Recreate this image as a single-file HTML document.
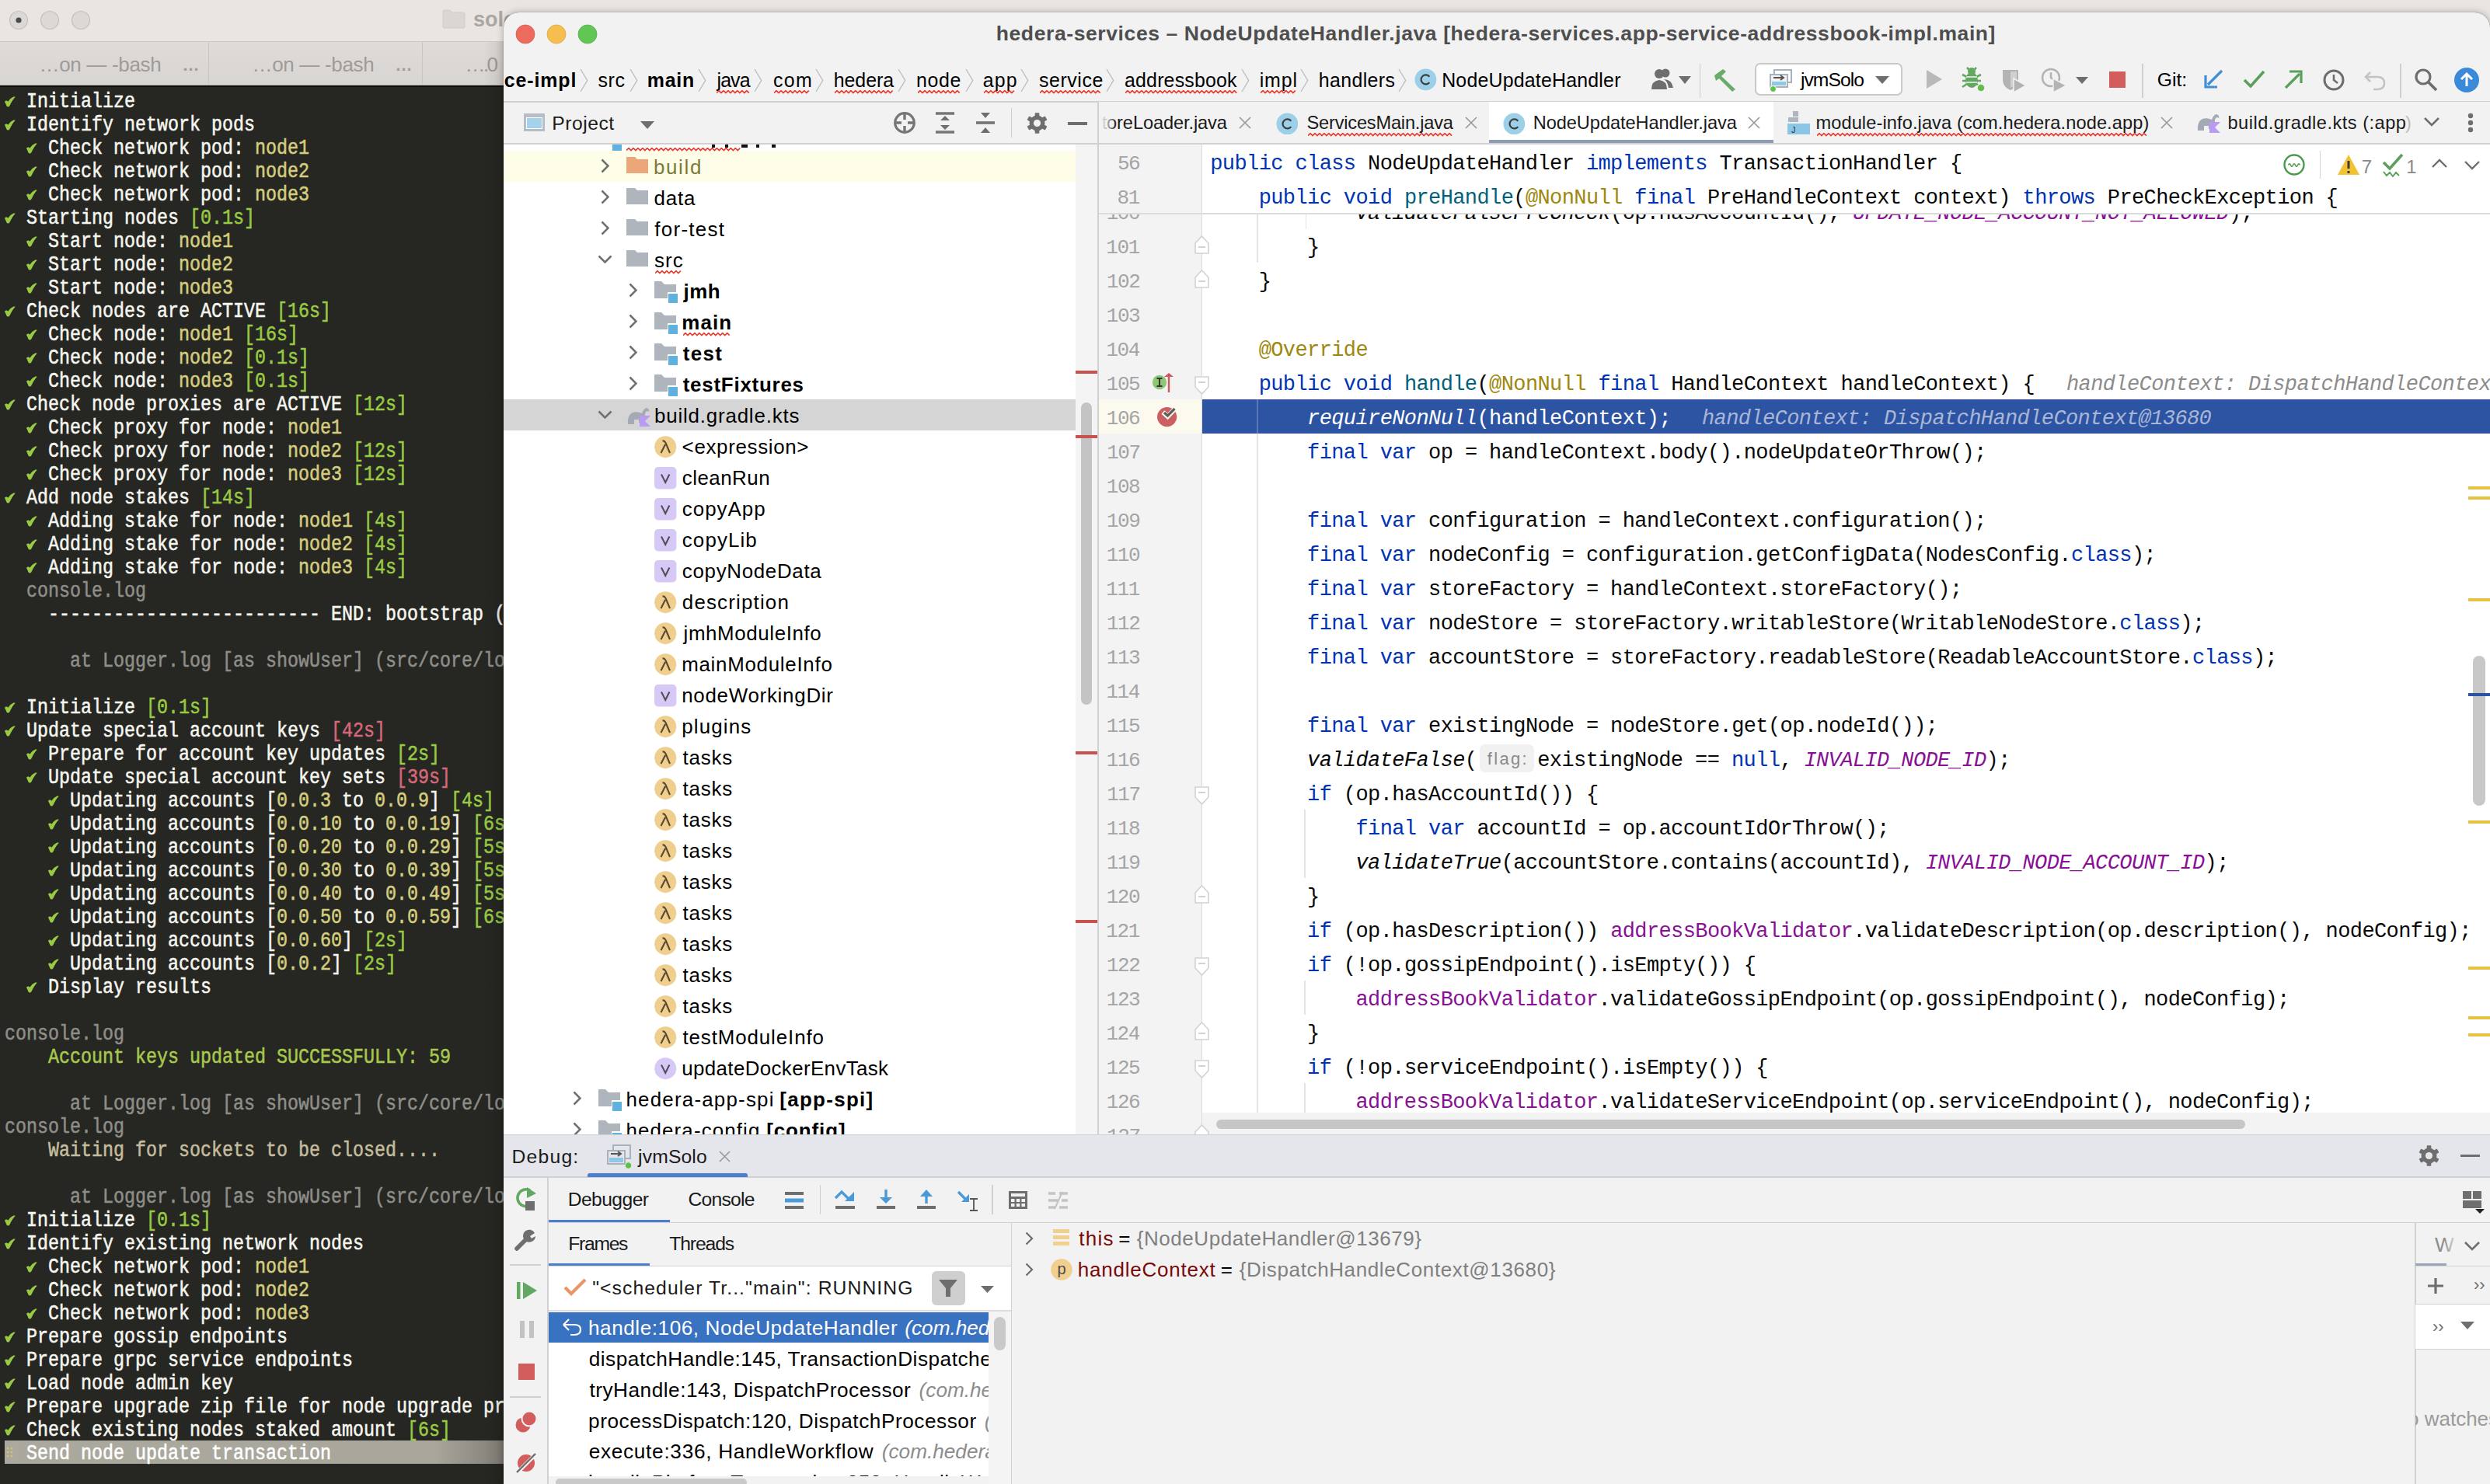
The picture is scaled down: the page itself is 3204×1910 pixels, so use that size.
<!DOCTYPE html><html><head><meta charset="utf-8"><style>
html,body{margin:0;padding:0;}
body{width:3204px;height:1910px;overflow:hidden;position:relative;background:#e6e2df;font-family:"Liberation Sans",sans-serif;}
.t{position:absolute;line-height:0;white-space:pre;}
.r{position:absolute;display:block;}
.clip{position:absolute;overflow:hidden;}
</style></head><body>
<div class="r" style="left:0.00px;top:0.00px;width:3204.00px;height:54.00px;background:#e9e5e2;"></div>
<div class="r" style="left:0.00px;top:53.00px;width:3204.00px;height:1.00px;background:#cdc9c6;"></div>
<svg class="r" style="left:11.00px;top:13.00px;" width="26" height="26" viewBox="0 0 26 26"><circle cx="13" cy="13" r="11.5" fill="#dcd8d5" stroke="#c3bfbc" stroke-width="1.2"/><circle cx="13" cy="13" r="3.6" fill="#4b4b4b"/></svg>
<svg class="r" style="left:51.00px;top:13.00px;" width="26" height="26" viewBox="0 0 26 26"><circle cx="13" cy="13" r="11.5" fill="#dcd8d5" stroke="#c3bfbc" stroke-width="1.2"/></svg>
<svg class="r" style="left:91.00px;top:13.00px;" width="26" height="26" viewBox="0 0 26 26"><circle cx="13" cy="13" r="11.5" fill="#dcd8d5" stroke="#c3bfbc" stroke-width="1.2"/></svg>
<svg class="r" style="left:569.00px;top:11.00px;" width="30" height="26" viewBox="0 0 30 26"><path d="M1 4 Q1 2 3 2 L10 2 L13 5 L27 5 Q29 5 29 7 L29 23 Q29 25 27 25 L3 25 Q1 25 1 23 Z" fill="#d9d6d3" stroke="#cfcbc8"/></svg>
<div class="t" style="left:609.00px;top:24.64px;font-size:27px;color:#a9a6a3;font-weight:bold;">solo</div>
<div class="r" style="left:0px;top:54px;width:648px;height:56px;background:linear-gradient(180deg,#dfdbd8 0%,#d8d4d1 100%);"></div>
<div class="r" style="left:268.00px;top:54.00px;width:1.00px;height:56.00px;background:#c9c5c2;"></div>
<div class="r" style="left:543.00px;top:54.00px;width:1.00px;height:56.00px;background:#c9c5c2;"></div>
<div class="t" style="left:50.47px;top:82.99px;font-size:26px;color:#9e9b98;letter-spacing:-0.319px;">…on — -bash</div>
<div class="t" style="left:234.58px;top:84.38px;font-size:22px;color:#9e9b98;font-weight:bold;">…</div>
<div class="t" style="left:324.47px;top:82.99px;font-size:26px;color:#9e9b98;letter-spacing:-0.319px;">…on — -bash</div>
<div class="t" style="left:508.58px;top:84.38px;font-size:22px;color:#9e9b98;font-weight:bold;">…</div>
<div class="t" style="left:598.47px;top:82.99px;font-size:26px;color:#9e9b98;letter-spacing:-2.569px;">….0</div>
<div class="r" style="left:0.00px;top:109.00px;width:648.00px;height:1.00px;background:#b9b5b2;"></div>
<div class="r" style="left:0.00px;top:110.00px;width:648.00px;height:1800.00px;background:#262622;"></div>
<div class="r" style="left:0.00px;top:110.00px;width:648.00px;height:2.00px;background:#0c0c0a;"></div>
<div class="clip" style="left:0px;top:110px;width:648px;height:1800px;"><div style="position:absolute;left:0px;top:-110px;width:3204px;height:1910px">
<div class="r" style="left:6px;top:1854px;width:650px;height:30px;background:linear-gradient(90deg,#aba99e 0%,#a9a79c 85%,#7d7b72 100%);"></div>
<svg class="r" style="left:6.40px;top:124.00px;" width="15" height="14" viewBox="0 0 15 14"><path d="M0,7.0 Q0.9,5.3 2.8,5.6 Q3.8,5.9 4.3,6.8 Q7.8,2.0 11.3,0.6 Q13.0,0.1 13.8,0.8 Q10.0,4.6 6.4,12.3 Q5.6,13.6 4.2,13.5 Q3.0,13.4 2.4,12.2 Q1.3,9.2 0,7.0 Z" fill="#98ca44"/></svg>
<div class="t" style="left:20.00px;top:131.02px;font-family:'Liberation Mono', monospace;font-size:27.0px;transform:scaleX(0.8641);transform-origin:0 0;-webkit-text-stroke-width:0.55px;"><span style="color:#f6f6f0"> Initialize</span></div>
<svg class="r" style="left:6.40px;top:154.00px;" width="15" height="14" viewBox="0 0 15 14"><path d="M0,7.0 Q0.9,5.3 2.8,5.6 Q3.8,5.9 4.3,6.8 Q7.8,2.0 11.3,0.6 Q13.0,0.1 13.8,0.8 Q10.0,4.6 6.4,12.3 Q5.6,13.6 4.2,13.5 Q3.0,13.4 2.4,12.2 Q1.3,9.2 0,7.0 Z" fill="#98ca44"/></svg>
<div class="t" style="left:20.00px;top:161.02px;font-family:'Liberation Mono', monospace;font-size:27.0px;transform:scaleX(0.8641);transform-origin:0 0;-webkit-text-stroke-width:0.55px;"><span style="color:#f6f6f0"> Identify network pods</span></div>
<div class="t" style="left:6.00px;top:191.02px;font-family:'Liberation Mono', monospace;font-size:27.0px;transform:scaleX(0.8641);transform-origin:0 0;-webkit-text-stroke-width:0.55px;"><span style="color:#f6f6f0">  </span></div>
<svg class="r" style="left:34.40px;top:184.00px;" width="15" height="14" viewBox="0 0 15 14"><path d="M0,7.0 Q0.9,5.3 2.8,5.6 Q3.8,5.9 4.3,6.8 Q7.8,2.0 11.3,0.6 Q13.0,0.1 13.8,0.8 Q10.0,4.6 6.4,12.3 Q5.6,13.6 4.2,13.5 Q3.0,13.4 2.4,12.2 Q1.3,9.2 0,7.0 Z" fill="#98ca44"/></svg>
<div class="t" style="left:48.00px;top:191.02px;font-family:'Liberation Mono', monospace;font-size:27.0px;transform:scaleX(0.8641);transform-origin:0 0;-webkit-text-stroke-width:0.55px;"><span style="color:#f6f6f0"> Check network pod: </span><span style="color:#d4cd7e">node1</span></div>
<div class="t" style="left:6.00px;top:221.02px;font-family:'Liberation Mono', monospace;font-size:27.0px;transform:scaleX(0.8641);transform-origin:0 0;-webkit-text-stroke-width:0.55px;"><span style="color:#f6f6f0">  </span></div>
<svg class="r" style="left:34.40px;top:214.00px;" width="15" height="14" viewBox="0 0 15 14"><path d="M0,7.0 Q0.9,5.3 2.8,5.6 Q3.8,5.9 4.3,6.8 Q7.8,2.0 11.3,0.6 Q13.0,0.1 13.8,0.8 Q10.0,4.6 6.4,12.3 Q5.6,13.6 4.2,13.5 Q3.0,13.4 2.4,12.2 Q1.3,9.2 0,7.0 Z" fill="#98ca44"/></svg>
<div class="t" style="left:48.00px;top:221.02px;font-family:'Liberation Mono', monospace;font-size:27.0px;transform:scaleX(0.8641);transform-origin:0 0;-webkit-text-stroke-width:0.55px;"><span style="color:#f6f6f0"> Check network pod: </span><span style="color:#d4cd7e">node2</span></div>
<div class="t" style="left:6.00px;top:251.02px;font-family:'Liberation Mono', monospace;font-size:27.0px;transform:scaleX(0.8641);transform-origin:0 0;-webkit-text-stroke-width:0.55px;"><span style="color:#f6f6f0">  </span></div>
<svg class="r" style="left:34.40px;top:244.00px;" width="15" height="14" viewBox="0 0 15 14"><path d="M0,7.0 Q0.9,5.3 2.8,5.6 Q3.8,5.9 4.3,6.8 Q7.8,2.0 11.3,0.6 Q13.0,0.1 13.8,0.8 Q10.0,4.6 6.4,12.3 Q5.6,13.6 4.2,13.5 Q3.0,13.4 2.4,12.2 Q1.3,9.2 0,7.0 Z" fill="#98ca44"/></svg>
<div class="t" style="left:48.00px;top:251.02px;font-family:'Liberation Mono', monospace;font-size:27.0px;transform:scaleX(0.8641);transform-origin:0 0;-webkit-text-stroke-width:0.55px;"><span style="color:#f6f6f0"> Check network pod: </span><span style="color:#d4cd7e">node3</span></div>
<svg class="r" style="left:6.40px;top:274.00px;" width="15" height="14" viewBox="0 0 15 14"><path d="M0,7.0 Q0.9,5.3 2.8,5.6 Q3.8,5.9 4.3,6.8 Q7.8,2.0 11.3,0.6 Q13.0,0.1 13.8,0.8 Q10.0,4.6 6.4,12.3 Q5.6,13.6 4.2,13.5 Q3.0,13.4 2.4,12.2 Q1.3,9.2 0,7.0 Z" fill="#98ca44"/></svg>
<div class="t" style="left:20.00px;top:281.02px;font-family:'Liberation Mono', monospace;font-size:27.0px;transform:scaleX(0.8641);transform-origin:0 0;-webkit-text-stroke-width:0.55px;"><span style="color:#f6f6f0"> Starting nodes </span><span style="color:#98ca44">[0.1s]</span></div>
<div class="t" style="left:6.00px;top:311.02px;font-family:'Liberation Mono', monospace;font-size:27.0px;transform:scaleX(0.8641);transform-origin:0 0;-webkit-text-stroke-width:0.55px;"><span style="color:#f6f6f0">  </span></div>
<svg class="r" style="left:34.40px;top:304.00px;" width="15" height="14" viewBox="0 0 15 14"><path d="M0,7.0 Q0.9,5.3 2.8,5.6 Q3.8,5.9 4.3,6.8 Q7.8,2.0 11.3,0.6 Q13.0,0.1 13.8,0.8 Q10.0,4.6 6.4,12.3 Q5.6,13.6 4.2,13.5 Q3.0,13.4 2.4,12.2 Q1.3,9.2 0,7.0 Z" fill="#98ca44"/></svg>
<div class="t" style="left:48.00px;top:311.02px;font-family:'Liberation Mono', monospace;font-size:27.0px;transform:scaleX(0.8641);transform-origin:0 0;-webkit-text-stroke-width:0.55px;"><span style="color:#f6f6f0"> Start node: </span><span style="color:#d4cd7e">node1</span></div>
<div class="t" style="left:6.00px;top:341.02px;font-family:'Liberation Mono', monospace;font-size:27.0px;transform:scaleX(0.8641);transform-origin:0 0;-webkit-text-stroke-width:0.55px;"><span style="color:#f6f6f0">  </span></div>
<svg class="r" style="left:34.40px;top:334.00px;" width="15" height="14" viewBox="0 0 15 14"><path d="M0,7.0 Q0.9,5.3 2.8,5.6 Q3.8,5.9 4.3,6.8 Q7.8,2.0 11.3,0.6 Q13.0,0.1 13.8,0.8 Q10.0,4.6 6.4,12.3 Q5.6,13.6 4.2,13.5 Q3.0,13.4 2.4,12.2 Q1.3,9.2 0,7.0 Z" fill="#98ca44"/></svg>
<div class="t" style="left:48.00px;top:341.02px;font-family:'Liberation Mono', monospace;font-size:27.0px;transform:scaleX(0.8641);transform-origin:0 0;-webkit-text-stroke-width:0.55px;"><span style="color:#f6f6f0"> Start node: </span><span style="color:#d4cd7e">node2</span></div>
<div class="t" style="left:6.00px;top:371.02px;font-family:'Liberation Mono', monospace;font-size:27.0px;transform:scaleX(0.8641);transform-origin:0 0;-webkit-text-stroke-width:0.55px;"><span style="color:#f6f6f0">  </span></div>
<svg class="r" style="left:34.40px;top:364.00px;" width="15" height="14" viewBox="0 0 15 14"><path d="M0,7.0 Q0.9,5.3 2.8,5.6 Q3.8,5.9 4.3,6.8 Q7.8,2.0 11.3,0.6 Q13.0,0.1 13.8,0.8 Q10.0,4.6 6.4,12.3 Q5.6,13.6 4.2,13.5 Q3.0,13.4 2.4,12.2 Q1.3,9.2 0,7.0 Z" fill="#98ca44"/></svg>
<div class="t" style="left:48.00px;top:371.02px;font-family:'Liberation Mono', monospace;font-size:27.0px;transform:scaleX(0.8641);transform-origin:0 0;-webkit-text-stroke-width:0.55px;"><span style="color:#f6f6f0"> Start node: </span><span style="color:#d4cd7e">node3</span></div>
<svg class="r" style="left:6.40px;top:394.00px;" width="15" height="14" viewBox="0 0 15 14"><path d="M0,7.0 Q0.9,5.3 2.8,5.6 Q3.8,5.9 4.3,6.8 Q7.8,2.0 11.3,0.6 Q13.0,0.1 13.8,0.8 Q10.0,4.6 6.4,12.3 Q5.6,13.6 4.2,13.5 Q3.0,13.4 2.4,12.2 Q1.3,9.2 0,7.0 Z" fill="#98ca44"/></svg>
<div class="t" style="left:20.00px;top:401.02px;font-family:'Liberation Mono', monospace;font-size:27.0px;transform:scaleX(0.8641);transform-origin:0 0;-webkit-text-stroke-width:0.55px;"><span style="color:#f6f6f0"> Check nodes are ACTIVE </span><span style="color:#98ca44">[16s]</span></div>
<div class="t" style="left:6.00px;top:431.02px;font-family:'Liberation Mono', monospace;font-size:27.0px;transform:scaleX(0.8641);transform-origin:0 0;-webkit-text-stroke-width:0.55px;"><span style="color:#f6f6f0">  </span></div>
<svg class="r" style="left:34.40px;top:424.00px;" width="15" height="14" viewBox="0 0 15 14"><path d="M0,7.0 Q0.9,5.3 2.8,5.6 Q3.8,5.9 4.3,6.8 Q7.8,2.0 11.3,0.6 Q13.0,0.1 13.8,0.8 Q10.0,4.6 6.4,12.3 Q5.6,13.6 4.2,13.5 Q3.0,13.4 2.4,12.2 Q1.3,9.2 0,7.0 Z" fill="#98ca44"/></svg>
<div class="t" style="left:48.00px;top:431.02px;font-family:'Liberation Mono', monospace;font-size:27.0px;transform:scaleX(0.8641);transform-origin:0 0;-webkit-text-stroke-width:0.55px;"><span style="color:#f6f6f0"> Check node: </span><span style="color:#d4cd7e">node1 </span><span style="color:#98ca44">[16s]</span></div>
<div class="t" style="left:6.00px;top:461.02px;font-family:'Liberation Mono', monospace;font-size:27.0px;transform:scaleX(0.8641);transform-origin:0 0;-webkit-text-stroke-width:0.55px;"><span style="color:#f6f6f0">  </span></div>
<svg class="r" style="left:34.40px;top:454.00px;" width="15" height="14" viewBox="0 0 15 14"><path d="M0,7.0 Q0.9,5.3 2.8,5.6 Q3.8,5.9 4.3,6.8 Q7.8,2.0 11.3,0.6 Q13.0,0.1 13.8,0.8 Q10.0,4.6 6.4,12.3 Q5.6,13.6 4.2,13.5 Q3.0,13.4 2.4,12.2 Q1.3,9.2 0,7.0 Z" fill="#98ca44"/></svg>
<div class="t" style="left:48.00px;top:461.02px;font-family:'Liberation Mono', monospace;font-size:27.0px;transform:scaleX(0.8641);transform-origin:0 0;-webkit-text-stroke-width:0.55px;"><span style="color:#f6f6f0"> Check node: </span><span style="color:#d4cd7e">node2 </span><span style="color:#98ca44">[0.1s]</span></div>
<div class="t" style="left:6.00px;top:491.02px;font-family:'Liberation Mono', monospace;font-size:27.0px;transform:scaleX(0.8641);transform-origin:0 0;-webkit-text-stroke-width:0.55px;"><span style="color:#f6f6f0">  </span></div>
<svg class="r" style="left:34.40px;top:484.00px;" width="15" height="14" viewBox="0 0 15 14"><path d="M0,7.0 Q0.9,5.3 2.8,5.6 Q3.8,5.9 4.3,6.8 Q7.8,2.0 11.3,0.6 Q13.0,0.1 13.8,0.8 Q10.0,4.6 6.4,12.3 Q5.6,13.6 4.2,13.5 Q3.0,13.4 2.4,12.2 Q1.3,9.2 0,7.0 Z" fill="#98ca44"/></svg>
<div class="t" style="left:48.00px;top:491.02px;font-family:'Liberation Mono', monospace;font-size:27.0px;transform:scaleX(0.8641);transform-origin:0 0;-webkit-text-stroke-width:0.55px;"><span style="color:#f6f6f0"> Check node: </span><span style="color:#d4cd7e">node3 </span><span style="color:#98ca44">[0.1s]</span></div>
<svg class="r" style="left:6.40px;top:514.00px;" width="15" height="14" viewBox="0 0 15 14"><path d="M0,7.0 Q0.9,5.3 2.8,5.6 Q3.8,5.9 4.3,6.8 Q7.8,2.0 11.3,0.6 Q13.0,0.1 13.8,0.8 Q10.0,4.6 6.4,12.3 Q5.6,13.6 4.2,13.5 Q3.0,13.4 2.4,12.2 Q1.3,9.2 0,7.0 Z" fill="#98ca44"/></svg>
<div class="t" style="left:20.00px;top:521.02px;font-family:'Liberation Mono', monospace;font-size:27.0px;transform:scaleX(0.8641);transform-origin:0 0;-webkit-text-stroke-width:0.55px;"><span style="color:#f6f6f0"> Check node proxies are ACTIVE </span><span style="color:#98ca44">[12s]</span></div>
<div class="t" style="left:6.00px;top:551.02px;font-family:'Liberation Mono', monospace;font-size:27.0px;transform:scaleX(0.8641);transform-origin:0 0;-webkit-text-stroke-width:0.55px;"><span style="color:#f6f6f0">  </span></div>
<svg class="r" style="left:34.40px;top:544.00px;" width="15" height="14" viewBox="0 0 15 14"><path d="M0,7.0 Q0.9,5.3 2.8,5.6 Q3.8,5.9 4.3,6.8 Q7.8,2.0 11.3,0.6 Q13.0,0.1 13.8,0.8 Q10.0,4.6 6.4,12.3 Q5.6,13.6 4.2,13.5 Q3.0,13.4 2.4,12.2 Q1.3,9.2 0,7.0 Z" fill="#98ca44"/></svg>
<div class="t" style="left:48.00px;top:551.02px;font-family:'Liberation Mono', monospace;font-size:27.0px;transform:scaleX(0.8641);transform-origin:0 0;-webkit-text-stroke-width:0.55px;"><span style="color:#f6f6f0"> Check proxy for node: </span><span style="color:#d4cd7e">node1</span></div>
<div class="t" style="left:6.00px;top:581.02px;font-family:'Liberation Mono', monospace;font-size:27.0px;transform:scaleX(0.8641);transform-origin:0 0;-webkit-text-stroke-width:0.55px;"><span style="color:#f6f6f0">  </span></div>
<svg class="r" style="left:34.40px;top:574.00px;" width="15" height="14" viewBox="0 0 15 14"><path d="M0,7.0 Q0.9,5.3 2.8,5.6 Q3.8,5.9 4.3,6.8 Q7.8,2.0 11.3,0.6 Q13.0,0.1 13.8,0.8 Q10.0,4.6 6.4,12.3 Q5.6,13.6 4.2,13.5 Q3.0,13.4 2.4,12.2 Q1.3,9.2 0,7.0 Z" fill="#98ca44"/></svg>
<div class="t" style="left:48.00px;top:581.02px;font-family:'Liberation Mono', monospace;font-size:27.0px;transform:scaleX(0.8641);transform-origin:0 0;-webkit-text-stroke-width:0.55px;"><span style="color:#f6f6f0"> Check proxy for node: </span><span style="color:#d4cd7e">node2 </span><span style="color:#98ca44">[12s]</span></div>
<div class="t" style="left:6.00px;top:611.02px;font-family:'Liberation Mono', monospace;font-size:27.0px;transform:scaleX(0.8641);transform-origin:0 0;-webkit-text-stroke-width:0.55px;"><span style="color:#f6f6f0">  </span></div>
<svg class="r" style="left:34.40px;top:604.00px;" width="15" height="14" viewBox="0 0 15 14"><path d="M0,7.0 Q0.9,5.3 2.8,5.6 Q3.8,5.9 4.3,6.8 Q7.8,2.0 11.3,0.6 Q13.0,0.1 13.8,0.8 Q10.0,4.6 6.4,12.3 Q5.6,13.6 4.2,13.5 Q3.0,13.4 2.4,12.2 Q1.3,9.2 0,7.0 Z" fill="#98ca44"/></svg>
<div class="t" style="left:48.00px;top:611.02px;font-family:'Liberation Mono', monospace;font-size:27.0px;transform:scaleX(0.8641);transform-origin:0 0;-webkit-text-stroke-width:0.55px;"><span style="color:#f6f6f0"> Check proxy for node: </span><span style="color:#d4cd7e">node3 </span><span style="color:#98ca44">[12s]</span></div>
<svg class="r" style="left:6.40px;top:634.00px;" width="15" height="14" viewBox="0 0 15 14"><path d="M0,7.0 Q0.9,5.3 2.8,5.6 Q3.8,5.9 4.3,6.8 Q7.8,2.0 11.3,0.6 Q13.0,0.1 13.8,0.8 Q10.0,4.6 6.4,12.3 Q5.6,13.6 4.2,13.5 Q3.0,13.4 2.4,12.2 Q1.3,9.2 0,7.0 Z" fill="#98ca44"/></svg>
<div class="t" style="left:20.00px;top:641.02px;font-family:'Liberation Mono', monospace;font-size:27.0px;transform:scaleX(0.8641);transform-origin:0 0;-webkit-text-stroke-width:0.55px;"><span style="color:#f6f6f0"> Add node stakes </span><span style="color:#98ca44">[14s]</span></div>
<div class="t" style="left:6.00px;top:671.02px;font-family:'Liberation Mono', monospace;font-size:27.0px;transform:scaleX(0.8641);transform-origin:0 0;-webkit-text-stroke-width:0.55px;"><span style="color:#f6f6f0">  </span></div>
<svg class="r" style="left:34.40px;top:664.00px;" width="15" height="14" viewBox="0 0 15 14"><path d="M0,7.0 Q0.9,5.3 2.8,5.6 Q3.8,5.9 4.3,6.8 Q7.8,2.0 11.3,0.6 Q13.0,0.1 13.8,0.8 Q10.0,4.6 6.4,12.3 Q5.6,13.6 4.2,13.5 Q3.0,13.4 2.4,12.2 Q1.3,9.2 0,7.0 Z" fill="#98ca44"/></svg>
<div class="t" style="left:48.00px;top:671.02px;font-family:'Liberation Mono', monospace;font-size:27.0px;transform:scaleX(0.8641);transform-origin:0 0;-webkit-text-stroke-width:0.55px;"><span style="color:#f6f6f0"> Adding stake for node: </span><span style="color:#d4cd7e">node1 </span><span style="color:#98ca44">[4s]</span></div>
<div class="t" style="left:6.00px;top:701.02px;font-family:'Liberation Mono', monospace;font-size:27.0px;transform:scaleX(0.8641);transform-origin:0 0;-webkit-text-stroke-width:0.55px;"><span style="color:#f6f6f0">  </span></div>
<svg class="r" style="left:34.40px;top:694.00px;" width="15" height="14" viewBox="0 0 15 14"><path d="M0,7.0 Q0.9,5.3 2.8,5.6 Q3.8,5.9 4.3,6.8 Q7.8,2.0 11.3,0.6 Q13.0,0.1 13.8,0.8 Q10.0,4.6 6.4,12.3 Q5.6,13.6 4.2,13.5 Q3.0,13.4 2.4,12.2 Q1.3,9.2 0,7.0 Z" fill="#98ca44"/></svg>
<div class="t" style="left:48.00px;top:701.02px;font-family:'Liberation Mono', monospace;font-size:27.0px;transform:scaleX(0.8641);transform-origin:0 0;-webkit-text-stroke-width:0.55px;"><span style="color:#f6f6f0"> Adding stake for node: </span><span style="color:#d4cd7e">node2 </span><span style="color:#98ca44">[4s]</span></div>
<div class="t" style="left:6.00px;top:731.02px;font-family:'Liberation Mono', monospace;font-size:27.0px;transform:scaleX(0.8641);transform-origin:0 0;-webkit-text-stroke-width:0.55px;"><span style="color:#f6f6f0">  </span></div>
<svg class="r" style="left:34.40px;top:724.00px;" width="15" height="14" viewBox="0 0 15 14"><path d="M0,7.0 Q0.9,5.3 2.8,5.6 Q3.8,5.9 4.3,6.8 Q7.8,2.0 11.3,0.6 Q13.0,0.1 13.8,0.8 Q10.0,4.6 6.4,12.3 Q5.6,13.6 4.2,13.5 Q3.0,13.4 2.4,12.2 Q1.3,9.2 0,7.0 Z" fill="#98ca44"/></svg>
<div class="t" style="left:48.00px;top:731.02px;font-family:'Liberation Mono', monospace;font-size:27.0px;transform:scaleX(0.8641);transform-origin:0 0;-webkit-text-stroke-width:0.55px;"><span style="color:#f6f6f0"> Adding stake for node: </span><span style="color:#d4cd7e">node3 </span><span style="color:#98ca44">[4s]</span></div>
<div class="t" style="left:6.00px;top:761.02px;font-family:'Liberation Mono', monospace;font-size:27.0px;transform:scaleX(0.8641);transform-origin:0 0;-webkit-text-stroke-width:0.55px;"><span style="color:#8e8e88">  console.log</span></div>
<div class="t" style="left:6.00px;top:791.02px;font-family:'Liberation Mono', monospace;font-size:27.0px;transform:scaleX(0.8641);transform-origin:0 0;-webkit-text-stroke-width:0.55px;"><span style="color:#f6f6f0">    ------------------------- END: bootstrap (</span></div>
<div class="t" style="left:6.00px;top:851.02px;font-family:'Liberation Mono', monospace;font-size:27.0px;transform:scaleX(0.8641);transform-origin:0 0;-webkit-text-stroke-width:0.55px;"><span style="color:#8e8e88">      at Logger.log [as showUser] (src/core/lo</span></div>
<svg class="r" style="left:6.40px;top:904.00px;" width="15" height="14" viewBox="0 0 15 14"><path d="M0,7.0 Q0.9,5.3 2.8,5.6 Q3.8,5.9 4.3,6.8 Q7.8,2.0 11.3,0.6 Q13.0,0.1 13.8,0.8 Q10.0,4.6 6.4,12.3 Q5.6,13.6 4.2,13.5 Q3.0,13.4 2.4,12.2 Q1.3,9.2 0,7.0 Z" fill="#98ca44"/></svg>
<div class="t" style="left:20.00px;top:911.02px;font-family:'Liberation Mono', monospace;font-size:27.0px;transform:scaleX(0.8641);transform-origin:0 0;-webkit-text-stroke-width:0.55px;"><span style="color:#f6f6f0"> Initialize </span><span style="color:#98ca44">[0.1s]</span></div>
<svg class="r" style="left:6.40px;top:934.00px;" width="15" height="14" viewBox="0 0 15 14"><path d="M0,7.0 Q0.9,5.3 2.8,5.6 Q3.8,5.9 4.3,6.8 Q7.8,2.0 11.3,0.6 Q13.0,0.1 13.8,0.8 Q10.0,4.6 6.4,12.3 Q5.6,13.6 4.2,13.5 Q3.0,13.4 2.4,12.2 Q1.3,9.2 0,7.0 Z" fill="#98ca44"/></svg>
<div class="t" style="left:20.00px;top:941.02px;font-family:'Liberation Mono', monospace;font-size:27.0px;transform:scaleX(0.8641);transform-origin:0 0;-webkit-text-stroke-width:0.55px;"><span style="color:#f6f6f0"> Update special account keys </span><span style="color:#d5677a">[42s]</span></div>
<div class="t" style="left:6.00px;top:971.02px;font-family:'Liberation Mono', monospace;font-size:27.0px;transform:scaleX(0.8641);transform-origin:0 0;-webkit-text-stroke-width:0.55px;"><span style="color:#f6f6f0">  </span></div>
<svg class="r" style="left:34.40px;top:964.00px;" width="15" height="14" viewBox="0 0 15 14"><path d="M0,7.0 Q0.9,5.3 2.8,5.6 Q3.8,5.9 4.3,6.8 Q7.8,2.0 11.3,0.6 Q13.0,0.1 13.8,0.8 Q10.0,4.6 6.4,12.3 Q5.6,13.6 4.2,13.5 Q3.0,13.4 2.4,12.2 Q1.3,9.2 0,7.0 Z" fill="#98ca44"/></svg>
<div class="t" style="left:48.00px;top:971.02px;font-family:'Liberation Mono', monospace;font-size:27.0px;transform:scaleX(0.8641);transform-origin:0 0;-webkit-text-stroke-width:0.55px;"><span style="color:#f6f6f0"> Prepare for account key updates </span><span style="color:#98ca44">[2s]</span></div>
<div class="t" style="left:6.00px;top:1001.02px;font-family:'Liberation Mono', monospace;font-size:27.0px;transform:scaleX(0.8641);transform-origin:0 0;-webkit-text-stroke-width:0.55px;"><span style="color:#f6f6f0">  </span></div>
<svg class="r" style="left:34.40px;top:994.00px;" width="15" height="14" viewBox="0 0 15 14"><path d="M0,7.0 Q0.9,5.3 2.8,5.6 Q3.8,5.9 4.3,6.8 Q7.8,2.0 11.3,0.6 Q13.0,0.1 13.8,0.8 Q10.0,4.6 6.4,12.3 Q5.6,13.6 4.2,13.5 Q3.0,13.4 2.4,12.2 Q1.3,9.2 0,7.0 Z" fill="#98ca44"/></svg>
<div class="t" style="left:48.00px;top:1001.02px;font-family:'Liberation Mono', monospace;font-size:27.0px;transform:scaleX(0.8641);transform-origin:0 0;-webkit-text-stroke-width:0.55px;"><span style="color:#f6f6f0"> Update special account key sets </span><span style="color:#d5677a">[39s]</span></div>
<div class="t" style="left:6.00px;top:1031.02px;font-family:'Liberation Mono', monospace;font-size:27.0px;transform:scaleX(0.8641);transform-origin:0 0;-webkit-text-stroke-width:0.55px;"><span style="color:#f6f6f0">    </span></div>
<svg class="r" style="left:62.40px;top:1024.00px;" width="15" height="14" viewBox="0 0 15 14"><path d="M0,7.0 Q0.9,5.3 2.8,5.6 Q3.8,5.9 4.3,6.8 Q7.8,2.0 11.3,0.6 Q13.0,0.1 13.8,0.8 Q10.0,4.6 6.4,12.3 Q5.6,13.6 4.2,13.5 Q3.0,13.4 2.4,12.2 Q1.3,9.2 0,7.0 Z" fill="#98ca44"/></svg>
<div class="t" style="left:76.00px;top:1031.02px;font-family:'Liberation Mono', monospace;font-size:27.0px;transform:scaleX(0.8641);transform-origin:0 0;-webkit-text-stroke-width:0.55px;"><span style="color:#f6f6f0"> Updating accounts [</span><span style="color:#d4cd7e">0.0.3</span><span style="color:#f6f6f0"> to </span><span style="color:#d4cd7e">0.0.9</span><span style="color:#f6f6f0">] </span><span style="color:#98ca44">[4s]</span></div>
<div class="t" style="left:6.00px;top:1061.02px;font-family:'Liberation Mono', monospace;font-size:27.0px;transform:scaleX(0.8641);transform-origin:0 0;-webkit-text-stroke-width:0.55px;"><span style="color:#f6f6f0">    </span></div>
<svg class="r" style="left:62.40px;top:1054.00px;" width="15" height="14" viewBox="0 0 15 14"><path d="M0,7.0 Q0.9,5.3 2.8,5.6 Q3.8,5.9 4.3,6.8 Q7.8,2.0 11.3,0.6 Q13.0,0.1 13.8,0.8 Q10.0,4.6 6.4,12.3 Q5.6,13.6 4.2,13.5 Q3.0,13.4 2.4,12.2 Q1.3,9.2 0,7.0 Z" fill="#98ca44"/></svg>
<div class="t" style="left:76.00px;top:1061.02px;font-family:'Liberation Mono', monospace;font-size:27.0px;transform:scaleX(0.8641);transform-origin:0 0;-webkit-text-stroke-width:0.55px;"><span style="color:#f6f6f0"> Updating accounts [</span><span style="color:#d4cd7e">0.0.10</span><span style="color:#f6f6f0"> to </span><span style="color:#d4cd7e">0.0.19</span><span style="color:#f6f6f0">] </span><span style="color:#98ca44">[6s</span></div>
<div class="t" style="left:6.00px;top:1091.02px;font-family:'Liberation Mono', monospace;font-size:27.0px;transform:scaleX(0.8641);transform-origin:0 0;-webkit-text-stroke-width:0.55px;"><span style="color:#f6f6f0">    </span></div>
<svg class="r" style="left:62.40px;top:1084.00px;" width="15" height="14" viewBox="0 0 15 14"><path d="M0,7.0 Q0.9,5.3 2.8,5.6 Q3.8,5.9 4.3,6.8 Q7.8,2.0 11.3,0.6 Q13.0,0.1 13.8,0.8 Q10.0,4.6 6.4,12.3 Q5.6,13.6 4.2,13.5 Q3.0,13.4 2.4,12.2 Q1.3,9.2 0,7.0 Z" fill="#98ca44"/></svg>
<div class="t" style="left:76.00px;top:1091.02px;font-family:'Liberation Mono', monospace;font-size:27.0px;transform:scaleX(0.8641);transform-origin:0 0;-webkit-text-stroke-width:0.55px;"><span style="color:#f6f6f0"> Updating accounts [</span><span style="color:#d4cd7e">0.0.20</span><span style="color:#f6f6f0"> to </span><span style="color:#d4cd7e">0.0.29</span><span style="color:#f6f6f0">] </span><span style="color:#98ca44">[5s</span></div>
<div class="t" style="left:6.00px;top:1121.02px;font-family:'Liberation Mono', monospace;font-size:27.0px;transform:scaleX(0.8641);transform-origin:0 0;-webkit-text-stroke-width:0.55px;"><span style="color:#f6f6f0">    </span></div>
<svg class="r" style="left:62.40px;top:1114.00px;" width="15" height="14" viewBox="0 0 15 14"><path d="M0,7.0 Q0.9,5.3 2.8,5.6 Q3.8,5.9 4.3,6.8 Q7.8,2.0 11.3,0.6 Q13.0,0.1 13.8,0.8 Q10.0,4.6 6.4,12.3 Q5.6,13.6 4.2,13.5 Q3.0,13.4 2.4,12.2 Q1.3,9.2 0,7.0 Z" fill="#98ca44"/></svg>
<div class="t" style="left:76.00px;top:1121.02px;font-family:'Liberation Mono', monospace;font-size:27.0px;transform:scaleX(0.8641);transform-origin:0 0;-webkit-text-stroke-width:0.55px;"><span style="color:#f6f6f0"> Updating accounts [</span><span style="color:#d4cd7e">0.0.30</span><span style="color:#f6f6f0"> to </span><span style="color:#d4cd7e">0.0.39</span><span style="color:#f6f6f0">] </span><span style="color:#98ca44">[5s</span></div>
<div class="t" style="left:6.00px;top:1151.02px;font-family:'Liberation Mono', monospace;font-size:27.0px;transform:scaleX(0.8641);transform-origin:0 0;-webkit-text-stroke-width:0.55px;"><span style="color:#f6f6f0">    </span></div>
<svg class="r" style="left:62.40px;top:1144.00px;" width="15" height="14" viewBox="0 0 15 14"><path d="M0,7.0 Q0.9,5.3 2.8,5.6 Q3.8,5.9 4.3,6.8 Q7.8,2.0 11.3,0.6 Q13.0,0.1 13.8,0.8 Q10.0,4.6 6.4,12.3 Q5.6,13.6 4.2,13.5 Q3.0,13.4 2.4,12.2 Q1.3,9.2 0,7.0 Z" fill="#98ca44"/></svg>
<div class="t" style="left:76.00px;top:1151.02px;font-family:'Liberation Mono', monospace;font-size:27.0px;transform:scaleX(0.8641);transform-origin:0 0;-webkit-text-stroke-width:0.55px;"><span style="color:#f6f6f0"> Updating accounts [</span><span style="color:#d4cd7e">0.0.40</span><span style="color:#f6f6f0"> to </span><span style="color:#d4cd7e">0.0.49</span><span style="color:#f6f6f0">] </span><span style="color:#98ca44">[5s</span></div>
<div class="t" style="left:6.00px;top:1181.02px;font-family:'Liberation Mono', monospace;font-size:27.0px;transform:scaleX(0.8641);transform-origin:0 0;-webkit-text-stroke-width:0.55px;"><span style="color:#f6f6f0">    </span></div>
<svg class="r" style="left:62.40px;top:1174.00px;" width="15" height="14" viewBox="0 0 15 14"><path d="M0,7.0 Q0.9,5.3 2.8,5.6 Q3.8,5.9 4.3,6.8 Q7.8,2.0 11.3,0.6 Q13.0,0.1 13.8,0.8 Q10.0,4.6 6.4,12.3 Q5.6,13.6 4.2,13.5 Q3.0,13.4 2.4,12.2 Q1.3,9.2 0,7.0 Z" fill="#98ca44"/></svg>
<div class="t" style="left:76.00px;top:1181.02px;font-family:'Liberation Mono', monospace;font-size:27.0px;transform:scaleX(0.8641);transform-origin:0 0;-webkit-text-stroke-width:0.55px;"><span style="color:#f6f6f0"> Updating accounts [</span><span style="color:#d4cd7e">0.0.50</span><span style="color:#f6f6f0"> to </span><span style="color:#d4cd7e">0.0.59</span><span style="color:#f6f6f0">] </span><span style="color:#98ca44">[6s</span></div>
<div class="t" style="left:6.00px;top:1211.02px;font-family:'Liberation Mono', monospace;font-size:27.0px;transform:scaleX(0.8641);transform-origin:0 0;-webkit-text-stroke-width:0.55px;"><span style="color:#f6f6f0">    </span></div>
<svg class="r" style="left:62.40px;top:1204.00px;" width="15" height="14" viewBox="0 0 15 14"><path d="M0,7.0 Q0.9,5.3 2.8,5.6 Q3.8,5.9 4.3,6.8 Q7.8,2.0 11.3,0.6 Q13.0,0.1 13.8,0.8 Q10.0,4.6 6.4,12.3 Q5.6,13.6 4.2,13.5 Q3.0,13.4 2.4,12.2 Q1.3,9.2 0,7.0 Z" fill="#98ca44"/></svg>
<div class="t" style="left:76.00px;top:1211.02px;font-family:'Liberation Mono', monospace;font-size:27.0px;transform:scaleX(0.8641);transform-origin:0 0;-webkit-text-stroke-width:0.55px;"><span style="color:#f6f6f0"> Updating accounts [</span><span style="color:#d4cd7e">0.0.60</span><span style="color:#f6f6f0">] </span><span style="color:#98ca44">[2s]</span></div>
<div class="t" style="left:6.00px;top:1241.02px;font-family:'Liberation Mono', monospace;font-size:27.0px;transform:scaleX(0.8641);transform-origin:0 0;-webkit-text-stroke-width:0.55px;"><span style="color:#f6f6f0">    </span></div>
<svg class="r" style="left:62.40px;top:1234.00px;" width="15" height="14" viewBox="0 0 15 14"><path d="M0,7.0 Q0.9,5.3 2.8,5.6 Q3.8,5.9 4.3,6.8 Q7.8,2.0 11.3,0.6 Q13.0,0.1 13.8,0.8 Q10.0,4.6 6.4,12.3 Q5.6,13.6 4.2,13.5 Q3.0,13.4 2.4,12.2 Q1.3,9.2 0,7.0 Z" fill="#98ca44"/></svg>
<div class="t" style="left:76.00px;top:1241.02px;font-family:'Liberation Mono', monospace;font-size:27.0px;transform:scaleX(0.8641);transform-origin:0 0;-webkit-text-stroke-width:0.55px;"><span style="color:#f6f6f0"> Updating accounts [</span><span style="color:#d4cd7e">0.0.2</span><span style="color:#f6f6f0">] </span><span style="color:#98ca44">[2s]</span></div>
<div class="t" style="left:6.00px;top:1271.02px;font-family:'Liberation Mono', monospace;font-size:27.0px;transform:scaleX(0.8641);transform-origin:0 0;-webkit-text-stroke-width:0.55px;"><span style="color:#f6f6f0">  </span></div>
<svg class="r" style="left:34.40px;top:1264.00px;" width="15" height="14" viewBox="0 0 15 14"><path d="M0,7.0 Q0.9,5.3 2.8,5.6 Q3.8,5.9 4.3,6.8 Q7.8,2.0 11.3,0.6 Q13.0,0.1 13.8,0.8 Q10.0,4.6 6.4,12.3 Q5.6,13.6 4.2,13.5 Q3.0,13.4 2.4,12.2 Q1.3,9.2 0,7.0 Z" fill="#98ca44"/></svg>
<div class="t" style="left:48.00px;top:1271.02px;font-family:'Liberation Mono', monospace;font-size:27.0px;transform:scaleX(0.8641);transform-origin:0 0;-webkit-text-stroke-width:0.55px;"><span style="color:#f6f6f0"> Display results</span></div>
<div class="t" style="left:6.00px;top:1331.02px;font-family:'Liberation Mono', monospace;font-size:27.0px;transform:scaleX(0.8641);transform-origin:0 0;-webkit-text-stroke-width:0.55px;"><span style="color:#8e8e88">console.log</span></div>
<div class="t" style="left:6.00px;top:1361.02px;font-family:'Liberation Mono', monospace;font-size:27.0px;transform:scaleX(0.8641);transform-origin:0 0;-webkit-text-stroke-width:0.55px;"><span style="color:#a7c84f">    Account keys updated SUCCESSFULLY: 59</span></div>
<div class="t" style="left:6.00px;top:1421.02px;font-family:'Liberation Mono', monospace;font-size:27.0px;transform:scaleX(0.8641);transform-origin:0 0;-webkit-text-stroke-width:0.55px;"><span style="color:#8e8e88">      at Logger.log [as showUser] (src/core/lo</span></div>
<div class="t" style="left:6.00px;top:1451.02px;font-family:'Liberation Mono', monospace;font-size:27.0px;transform:scaleX(0.8641);transform-origin:0 0;-webkit-text-stroke-width:0.55px;"><span style="color:#8e8e88">console.log</span></div>
<div class="t" style="left:6.00px;top:1481.02px;font-family:'Liberation Mono', monospace;font-size:27.0px;transform:scaleX(0.8641);transform-origin:0 0;-webkit-text-stroke-width:0.55px;"><span style="color:#c3bd9e">    Waiting for sockets to be closed....</span></div>
<div class="t" style="left:6.00px;top:1541.02px;font-family:'Liberation Mono', monospace;font-size:27.0px;transform:scaleX(0.8641);transform-origin:0 0;-webkit-text-stroke-width:0.55px;"><span style="color:#8e8e88">      at Logger.log [as showUser] (src/core/lo</span></div>
<svg class="r" style="left:6.40px;top:1564.00px;" width="15" height="14" viewBox="0 0 15 14"><path d="M0,7.0 Q0.9,5.3 2.8,5.6 Q3.8,5.9 4.3,6.8 Q7.8,2.0 11.3,0.6 Q13.0,0.1 13.8,0.8 Q10.0,4.6 6.4,12.3 Q5.6,13.6 4.2,13.5 Q3.0,13.4 2.4,12.2 Q1.3,9.2 0,7.0 Z" fill="#98ca44"/></svg>
<div class="t" style="left:20.00px;top:1571.02px;font-family:'Liberation Mono', monospace;font-size:27.0px;transform:scaleX(0.8641);transform-origin:0 0;-webkit-text-stroke-width:0.55px;"><span style="color:#f6f6f0"> Initialize </span><span style="color:#98ca44">[0.1s]</span></div>
<svg class="r" style="left:6.40px;top:1594.00px;" width="15" height="14" viewBox="0 0 15 14"><path d="M0,7.0 Q0.9,5.3 2.8,5.6 Q3.8,5.9 4.3,6.8 Q7.8,2.0 11.3,0.6 Q13.0,0.1 13.8,0.8 Q10.0,4.6 6.4,12.3 Q5.6,13.6 4.2,13.5 Q3.0,13.4 2.4,12.2 Q1.3,9.2 0,7.0 Z" fill="#98ca44"/></svg>
<div class="t" style="left:20.00px;top:1601.02px;font-family:'Liberation Mono', monospace;font-size:27.0px;transform:scaleX(0.8641);transform-origin:0 0;-webkit-text-stroke-width:0.55px;"><span style="color:#f6f6f0"> Identify existing network nodes</span></div>
<div class="t" style="left:6.00px;top:1631.02px;font-family:'Liberation Mono', monospace;font-size:27.0px;transform:scaleX(0.8641);transform-origin:0 0;-webkit-text-stroke-width:0.55px;"><span style="color:#f6f6f0">  </span></div>
<svg class="r" style="left:34.40px;top:1624.00px;" width="15" height="14" viewBox="0 0 15 14"><path d="M0,7.0 Q0.9,5.3 2.8,5.6 Q3.8,5.9 4.3,6.8 Q7.8,2.0 11.3,0.6 Q13.0,0.1 13.8,0.8 Q10.0,4.6 6.4,12.3 Q5.6,13.6 4.2,13.5 Q3.0,13.4 2.4,12.2 Q1.3,9.2 0,7.0 Z" fill="#98ca44"/></svg>
<div class="t" style="left:48.00px;top:1631.02px;font-family:'Liberation Mono', monospace;font-size:27.0px;transform:scaleX(0.8641);transform-origin:0 0;-webkit-text-stroke-width:0.55px;"><span style="color:#f6f6f0"> Check network pod: </span><span style="color:#d4cd7e">node1</span></div>
<div class="t" style="left:6.00px;top:1661.02px;font-family:'Liberation Mono', monospace;font-size:27.0px;transform:scaleX(0.8641);transform-origin:0 0;-webkit-text-stroke-width:0.55px;"><span style="color:#f6f6f0">  </span></div>
<svg class="r" style="left:34.40px;top:1654.00px;" width="15" height="14" viewBox="0 0 15 14"><path d="M0,7.0 Q0.9,5.3 2.8,5.6 Q3.8,5.9 4.3,6.8 Q7.8,2.0 11.3,0.6 Q13.0,0.1 13.8,0.8 Q10.0,4.6 6.4,12.3 Q5.6,13.6 4.2,13.5 Q3.0,13.4 2.4,12.2 Q1.3,9.2 0,7.0 Z" fill="#98ca44"/></svg>
<div class="t" style="left:48.00px;top:1661.02px;font-family:'Liberation Mono', monospace;font-size:27.0px;transform:scaleX(0.8641);transform-origin:0 0;-webkit-text-stroke-width:0.55px;"><span style="color:#f6f6f0"> Check network pod: </span><span style="color:#d4cd7e">node2</span></div>
<div class="t" style="left:6.00px;top:1691.02px;font-family:'Liberation Mono', monospace;font-size:27.0px;transform:scaleX(0.8641);transform-origin:0 0;-webkit-text-stroke-width:0.55px;"><span style="color:#f6f6f0">  </span></div>
<svg class="r" style="left:34.40px;top:1684.00px;" width="15" height="14" viewBox="0 0 15 14"><path d="M0,7.0 Q0.9,5.3 2.8,5.6 Q3.8,5.9 4.3,6.8 Q7.8,2.0 11.3,0.6 Q13.0,0.1 13.8,0.8 Q10.0,4.6 6.4,12.3 Q5.6,13.6 4.2,13.5 Q3.0,13.4 2.4,12.2 Q1.3,9.2 0,7.0 Z" fill="#98ca44"/></svg>
<div class="t" style="left:48.00px;top:1691.02px;font-family:'Liberation Mono', monospace;font-size:27.0px;transform:scaleX(0.8641);transform-origin:0 0;-webkit-text-stroke-width:0.55px;"><span style="color:#f6f6f0"> Check network pod: </span><span style="color:#d4cd7e">node3</span></div>
<svg class="r" style="left:6.40px;top:1714.00px;" width="15" height="14" viewBox="0 0 15 14"><path d="M0,7.0 Q0.9,5.3 2.8,5.6 Q3.8,5.9 4.3,6.8 Q7.8,2.0 11.3,0.6 Q13.0,0.1 13.8,0.8 Q10.0,4.6 6.4,12.3 Q5.6,13.6 4.2,13.5 Q3.0,13.4 2.4,12.2 Q1.3,9.2 0,7.0 Z" fill="#98ca44"/></svg>
<div class="t" style="left:20.00px;top:1721.02px;font-family:'Liberation Mono', monospace;font-size:27.0px;transform:scaleX(0.8641);transform-origin:0 0;-webkit-text-stroke-width:0.55px;"><span style="color:#f6f6f0"> Prepare gossip endpoints</span></div>
<svg class="r" style="left:6.40px;top:1744.00px;" width="15" height="14" viewBox="0 0 15 14"><path d="M0,7.0 Q0.9,5.3 2.8,5.6 Q3.8,5.9 4.3,6.8 Q7.8,2.0 11.3,0.6 Q13.0,0.1 13.8,0.8 Q10.0,4.6 6.4,12.3 Q5.6,13.6 4.2,13.5 Q3.0,13.4 2.4,12.2 Q1.3,9.2 0,7.0 Z" fill="#98ca44"/></svg>
<div class="t" style="left:20.00px;top:1751.02px;font-family:'Liberation Mono', monospace;font-size:27.0px;transform:scaleX(0.8641);transform-origin:0 0;-webkit-text-stroke-width:0.55px;"><span style="color:#f6f6f0"> Prepare grpc service endpoints</span></div>
<svg class="r" style="left:6.40px;top:1774.00px;" width="15" height="14" viewBox="0 0 15 14"><path d="M0,7.0 Q0.9,5.3 2.8,5.6 Q3.8,5.9 4.3,6.8 Q7.8,2.0 11.3,0.6 Q13.0,0.1 13.8,0.8 Q10.0,4.6 6.4,12.3 Q5.6,13.6 4.2,13.5 Q3.0,13.4 2.4,12.2 Q1.3,9.2 0,7.0 Z" fill="#98ca44"/></svg>
<div class="t" style="left:20.00px;top:1781.02px;font-family:'Liberation Mono', monospace;font-size:27.0px;transform:scaleX(0.8641);transform-origin:0 0;-webkit-text-stroke-width:0.55px;"><span style="color:#f6f6f0"> Load node admin key</span></div>
<svg class="r" style="left:6.40px;top:1804.00px;" width="15" height="14" viewBox="0 0 15 14"><path d="M0,7.0 Q0.9,5.3 2.8,5.6 Q3.8,5.9 4.3,6.8 Q7.8,2.0 11.3,0.6 Q13.0,0.1 13.8,0.8 Q10.0,4.6 6.4,12.3 Q5.6,13.6 4.2,13.5 Q3.0,13.4 2.4,12.2 Q1.3,9.2 0,7.0 Z" fill="#98ca44"/></svg>
<div class="t" style="left:20.00px;top:1811.02px;font-family:'Liberation Mono', monospace;font-size:27.0px;transform:scaleX(0.8641);transform-origin:0 0;-webkit-text-stroke-width:0.55px;"><span style="color:#f6f6f0"> Prepare upgrade zip file for node upgrade pr</span></div>
<svg class="r" style="left:6.40px;top:1834.00px;" width="15" height="14" viewBox="0 0 15 14"><path d="M0,7.0 Q0.9,5.3 2.8,5.6 Q3.8,5.9 4.3,6.8 Q7.8,2.0 11.3,0.6 Q13.0,0.1 13.8,0.8 Q10.0,4.6 6.4,12.3 Q5.6,13.6 4.2,13.5 Q3.0,13.4 2.4,12.2 Q1.3,9.2 0,7.0 Z" fill="#98ca44"/></svg>
<div class="t" style="left:20.00px;top:1841.02px;font-family:'Liberation Mono', monospace;font-size:27.0px;transform:scaleX(0.8641);transform-origin:0 0;-webkit-text-stroke-width:0.55px;"><span style="color:#f6f6f0"> Check existing nodes staked amount </span><span style="color:#98ca44">[6s]</span></div>
<svg class="r" style="left:8.00px;top:1861.20px;" width="10" height="18" viewBox="0 0 10 18"><circle cx="2" cy="3" r="1.3" fill="#d7c56a"/><circle cx="7" cy="3" r="1.3" fill="#d7c56a"/><circle cx="2" cy="8" r="1.3" fill="#d7c56a"/><circle cx="7" cy="8" r="1.3" fill="#d7c56a"/><circle cx="2" cy="13" r="1.3" fill="#d7c56a"/><circle cx="7" cy="13" r="1.3" fill="#d7c56a"/></svg>
<div class="t" style="left:6.00px;top:1871.02px;font-family:'Liberation Mono', monospace;font-size:27.0px;transform:scaleX(0.8641);transform-origin:0 0;-webkit-text-stroke-width:0.55px;"><span style="color:#ffffff">  Send node update transaction</span></div>
</div></div>
<div class="r" style="left:622px;top:54px;width:26px;height:1856px;background:linear-gradient(90deg,rgba(0,0,0,0) 0%,rgba(0,0,0,0.09) 100%);"></div>
<div class="r" style="left:648px;top:16px;width:2556px;height:1914px;background:#f2f2f2;border-radius:20px 20px 0 0;box-shadow:0 0 10px rgba(0,0,0,0.28), 0 0 1px rgba(0,0,0,0.5);"></div>
<svg class="r" style="left:663.00px;top:31.00px;" width="26" height="26" viewBox="0 0 26 26"><circle cx="13" cy="13" r="12" fill="#ee6b60" stroke="#d9574c" stroke-width="0.8"/></svg>
<svg class="r" style="left:703.00px;top:31.00px;" width="26" height="26" viewBox="0 0 26 26"><circle cx="13" cy="13" r="12" fill="#f6be4f" stroke="#dea63c" stroke-width="0.8"/></svg>
<svg class="r" style="left:743.00px;top:31.00px;" width="26" height="26" viewBox="0 0 26 26"><circle cx="13" cy="13" r="12" fill="#62c655" stroke="#4fae44" stroke-width="0.8"/></svg>
<div class="t" style="left:1281.75px;top:42.62px;font-size:26.5px;color:#4e4e4e;font-weight:bold;letter-spacing:0.598px;">hedera-services – NodeUpdateHandler.java [hedera-services.app-service-addressbook-impl.main]</div>
<div class="clip" style="left:648px;top:70px;width:1470px;height:61px;"><div style="position:absolute;left:-648px;top:-70px;width:3204px;height:1910px">
<div class="t" style="left:648.63px;top:103.17px;font-size:24.9px;color:#000000;font-weight:bold;letter-spacing:0.927px;">ce-impl</div>
<div class="t" style="left:769.41px;top:103.17px;font-size:24.9px;color:#000000;letter-spacing:0.628px;">src</div>
<div class="t" style="left:832.76px;top:103.17px;font-size:24.9px;color:#000000;font-weight:bold;letter-spacing:0.756px;">main</div>
<div class="t" style="left:922.61px;top:103.17px;font-size:24.9px;color:#000000;letter-spacing:-0.929px;">java</div>
<svg class="r" style="left:922.00px;top:115.90px;" width="45" height="5" viewBox="0 0 45 5"><polyline points="0.00,3.60 2.98,0.60 5.97,3.60 8.96,0.60 11.94,3.60 14.92,0.60 17.91,3.60 20.89,0.60 23.88,3.60 26.86,0.60 29.85,3.60 32.84,0.60 35.82,3.60 38.80,0.60 41.79,3.60" fill="none" stroke="#e8392c" stroke-width="1.6" stroke-linejoin="miter"/></svg>
<div class="t" style="left:994.94px;top:103.17px;font-size:24.9px;color:#000000;letter-spacing:1.429px;">com</div>
<svg class="r" style="left:996.00px;top:115.90px;" width="49" height="5" viewBox="0 0 49 5"><polyline points="0.00,3.60 2.98,0.60 5.97,3.60 8.96,0.60 11.94,3.60 14.92,0.60 17.91,3.60 20.89,0.60 23.88,3.60 26.86,0.60 29.85,3.60 32.84,0.60 35.82,3.60 38.80,0.60 41.79,3.60 44.77,0.60" fill="none" stroke="#e8392c" stroke-width="1.6" stroke-linejoin="miter"/></svg>
<div class="t" style="left:1072.67px;top:103.17px;font-size:24.9px;color:#000000;letter-spacing:-0.002px;">hedera</div>
<svg class="r" style="left:1074.40px;top:115.90px;" width="77" height="5" viewBox="0 0 77 5"><polyline points="0.00,3.60 2.98,0.60 5.97,3.60 8.96,0.60 11.94,3.60 14.92,0.60 17.91,3.60 20.89,0.60 23.88,3.60 26.86,0.60 29.85,3.60 32.84,0.60 35.82,3.60 38.80,0.60 41.79,3.60 44.77,0.60 47.76,3.60 50.74,0.60 53.73,3.60 56.71,0.60 59.70,3.60 62.68,0.60 65.67,3.60 68.66,0.60 71.64,3.60 74.62,0.60" fill="none" stroke="#e8392c" stroke-width="1.6" stroke-linejoin="miter"/></svg>
<div class="t" style="left:1179.05px;top:103.17px;font-size:24.9px;color:#000000;letter-spacing:0.655px;">node</div>
<svg class="r" style="left:1180.70px;top:115.90px;" width="56" height="5" viewBox="0 0 56 5"><polyline points="0.00,3.60 2.98,0.60 5.97,3.60 8.96,0.60 11.94,3.60 14.92,0.60 17.91,3.60 20.89,0.60 23.88,3.60 26.86,0.60 29.85,3.60 32.84,0.60 35.82,3.60 38.80,0.60 41.79,3.60 44.77,0.60 47.76,3.60 50.74,0.60 53.73,3.60" fill="none" stroke="#e8392c" stroke-width="1.6" stroke-linejoin="miter"/></svg>
<div class="t" style="left:1264.84px;top:103.17px;font-size:24.9px;color:#000000;letter-spacing:1.129px;">app</div>
<svg class="r" style="left:1265.90px;top:115.90px;" width="43" height="5" viewBox="0 0 43 5"><polyline points="0.00,3.60 2.98,0.60 5.97,3.60 8.96,0.60 11.94,3.60 14.92,0.60 17.91,3.60 20.89,0.60 23.88,3.60 26.86,0.60 29.85,3.60 32.84,0.60 35.82,3.60 38.80,0.60" fill="none" stroke="#e8392c" stroke-width="1.6" stroke-linejoin="miter"/></svg>
<div class="t" style="left:1337.11px;top:103.17px;font-size:24.9px;color:#000000;letter-spacing:0.554px;">service</div>
<svg class="r" style="left:1337.80px;top:115.90px;" width="82" height="5" viewBox="0 0 82 5"><polyline points="0.00,3.60 2.98,0.60 5.97,3.60 8.96,0.60 11.94,3.60 14.92,0.60 17.91,3.60 20.89,0.60 23.88,3.60 26.86,0.60 29.85,3.60 32.84,0.60 35.82,3.60 38.80,0.60 41.79,3.60 44.77,0.60 47.76,3.60 50.74,0.60 53.73,3.60 56.71,0.60 59.70,3.60 62.68,0.60 65.67,3.60 68.66,0.60 71.64,3.60 74.62,0.60 77.61,3.60" fill="none" stroke="#e8392c" stroke-width="1.6" stroke-linejoin="miter"/></svg>
<div class="t" style="left:1447.04px;top:103.17px;font-size:24.9px;color:#000000;letter-spacing:0.194px;">addressbook</div>
<svg class="r" style="left:1448.10px;top:115.90px;" width="145" height="5" viewBox="0 0 145 5"><polyline points="0.00,3.60 2.98,0.60 5.97,3.60 8.96,0.60 11.94,3.60 14.92,0.60 17.91,3.60 20.89,0.60 23.88,3.60 26.86,0.60 29.85,3.60 32.84,0.60 35.82,3.60 38.80,0.60 41.79,3.60 44.77,0.60 47.76,3.60 50.74,0.60 53.73,3.60 56.71,0.60 59.70,3.60 62.68,0.60 65.67,3.60 68.66,0.60 71.64,3.60 74.62,0.60 77.61,3.60 80.59,0.60 83.58,3.60 86.56,0.60 89.55,3.60 92.53,0.60 95.52,3.60 98.50,0.60 101.49,3.60 104.47,0.60 107.46,3.60 110.44,0.60 113.43,3.60 116.41,0.60 119.40,3.60 122.38,0.60 125.37,3.60 128.35,0.60 131.34,3.60 134.32,0.60 137.31,3.60 140.29,0.60 143.28,3.60" fill="none" stroke="#e8392c" stroke-width="1.6" stroke-linejoin="miter"/></svg>
<div class="t" style="left:1620.63px;top:103.17px;font-size:24.9px;color:#000000;letter-spacing:0.958px;">impl</div>
<svg class="r" style="left:1622.30px;top:115.90px;" width="47" height="5" viewBox="0 0 47 5"><polyline points="0.00,3.60 2.98,0.60 5.97,3.60 8.96,0.60 11.94,3.60 14.92,0.60 17.91,3.60 20.89,0.60 23.88,3.60 26.86,0.60 29.85,3.60 32.84,0.60 35.82,3.60 38.80,0.60 41.79,3.60 44.77,0.60" fill="none" stroke="#e8392c" stroke-width="1.6" stroke-linejoin="miter"/></svg>
<div class="t" style="left:1696.87px;top:103.17px;font-size:24.9px;color:#000000;letter-spacing:0.358px;">handlers</div>
<div class="t" style="left:1855.16px;top:103.17px;font-size:24.9px;color:#000000;letter-spacing:0.208px;">NodeUpdateHandler</div>
</div></div>
<svg class="r" style="left:745.50px;top:88.00px;" width="12" height="31" viewBox="0 0 12 31"><polyline points="1,1 9.7,15.5 1,30" fill="none" stroke="#b9bec4" stroke-width="1.4"/></svg>
<svg class="r" style="left:809.50px;top:88.00px;" width="12" height="31" viewBox="0 0 12 31"><polyline points="1,1 9.7,15.5 1,30" fill="none" stroke="#b9bec4" stroke-width="1.4"/></svg>
<svg class="r" style="left:898.00px;top:88.00px;" width="12" height="31" viewBox="0 0 12 31"><polyline points="1,1 9.7,15.5 1,30" fill="none" stroke="#b9bec4" stroke-width="1.4"/></svg>
<svg class="r" style="left:970.20px;top:88.00px;" width="12" height="31" viewBox="0 0 12 31"><polyline points="1,1 9.7,15.5 1,30" fill="none" stroke="#b9bec4" stroke-width="1.4"/></svg>
<svg class="r" style="left:1049.00px;top:88.00px;" width="12" height="31" viewBox="0 0 12 31"><polyline points="1,1 9.7,15.5 1,30" fill="none" stroke="#b9bec4" stroke-width="1.4"/></svg>
<svg class="r" style="left:1155.00px;top:88.00px;" width="12" height="31" viewBox="0 0 12 31"><polyline points="1,1 9.7,15.5 1,30" fill="none" stroke="#b9bec4" stroke-width="1.4"/></svg>
<svg class="r" style="left:1241.50px;top:88.00px;" width="12" height="31" viewBox="0 0 12 31"><polyline points="1,1 9.7,15.5 1,30" fill="none" stroke="#b9bec4" stroke-width="1.4"/></svg>
<svg class="r" style="left:1312.50px;top:88.00px;" width="12" height="31" viewBox="0 0 12 31"><polyline points="1,1 9.7,15.5 1,30" fill="none" stroke="#b9bec4" stroke-width="1.4"/></svg>
<svg class="r" style="left:1423.30px;top:88.00px;" width="12" height="31" viewBox="0 0 12 31"><polyline points="1,1 9.7,15.5 1,30" fill="none" stroke="#b9bec4" stroke-width="1.4"/></svg>
<svg class="r" style="left:1596.50px;top:88.00px;" width="12" height="31" viewBox="0 0 12 31"><polyline points="1,1 9.7,15.5 1,30" fill="none" stroke="#b9bec4" stroke-width="1.4"/></svg>
<svg class="r" style="left:1672.80px;top:88.00px;" width="12" height="31" viewBox="0 0 12 31"><polyline points="1,1 9.7,15.5 1,30" fill="none" stroke="#b9bec4" stroke-width="1.4"/></svg>
<svg class="r" style="left:1799.30px;top:88.00px;" width="12" height="31" viewBox="0 0 12 31"><polyline points="1,1 9.7,15.5 1,30" fill="none" stroke="#b9bec4" stroke-width="1.4"/></svg>
<svg class="r" style="left:1820.00px;top:88.20px;" width="28.8" height="28.8" viewBox="0 0 28.8 28.8"><circle cx="14.4" cy="14.4" r="13.9" fill="#9ccfe8"/><path d="M19.3,10.7 A6,6 0 1 0 19.3,18.1" fill="none" stroke="#3d3d3d" stroke-width="2.2"/></svg>
<svg class="r" style="left:2124.00px;top:86.00px;" width="32" height="32" viewBox="0 0 32 32"><circle cx="11" cy="9" r="6" fill="#6e6e6e"/><path d="M1 29 Q1 18 11 17 Q21 18 21 29 Z" fill="#6e6e6e"/><circle cx="19" cy="8" r="5.5" fill="#6e6e6e"/><path d="M17 16 Q27 16 29 27 L23 27 Q22 19 17 16Z" fill="#6e6e6e"/></svg>
<svg class="r" style="left:2159.00px;top:97.00px;" width="18" height="12" viewBox="0 0 18 12"><path d="M1 1 L17 1 L9 11 Z" fill="#6e6e6e"/></svg>
<div class="r" style="left:2186.50px;top:82.00px;width:1.50px;height:44.00px;background:#cfcfcf;"></div>
<svg class="r" style="left:2203.00px;top:88.00px;" width="32" height="30" viewBox="0 0 32 30"><path d="M3 9 L14 1 L18 4 L12 10 L30 27 L26 30 L9 13 L5 16 Z" fill="#6aaa6a"/></svg>
<div class="r" style="left:2258px;top:81px;width:190px;height:42px;border:2px solid #c9c9c9;border-radius:7px;background:#fff;box-sizing:border-box;"></div>
<svg class="r" style="left:2277.00px;top:88.00px;" width="34" height="32" viewBox="0 0 34 32"><rect x="6" y="2" width="22" height="16" fill="none" stroke="#a8b2bd" stroke-width="2"/><rect x="1" y="8" width="22" height="16" fill="#f2f2f2" stroke="#a8b2bd" stroke-width="2"/><rect x="3" y="17" width="18" height="5" fill="#8fc7e6"/><path d="M5 12 L17 12 M14 9 L18 12 L14 15" stroke="#555" stroke-width="2" fill="none"/><circle cx="4.5" cy="26.5" r="4" fill="#5fbf49" stroke="#fff" stroke-width="1"/></svg>
<div class="t" style="left:2316.90px;top:102.94px;font-size:24.7px;color:#000;letter-spacing:-0.953px;">jvmSolo</div>
<svg class="r" style="left:2412.00px;top:97.00px;" width="20" height="12" viewBox="0 0 20 12"><path d="M1 1 L19 1 L10 11 Z" fill="#6e6e6e"/></svg>
<svg class="r" style="left:2477.00px;top:89.00px;" width="24" height="26" viewBox="0 0 24 26"><path d="M2 1 L22 13 L2 25 Z" fill="#b9b9b9"/></svg>
<svg class="r" style="left:2522.00px;top:86.00px;" width="36" height="34" viewBox="0 0 36 34"><ellipse cx="15" cy="17" rx="8" ry="10" fill="#62a862"/><circle cx="15" cy="6" r="5" fill="#62a862"/><path d="M3 10 L9 13 M3 18 L8 18 M3 26 L9 22 M27 10 L21 13 M27 18 L22 18 M27 26 L21 22 M9 1 L12 4 M21 1 L18 4" stroke="#62a862" stroke-width="2.6"/><path d="M8 13 L22 13 M8 20 L22 20" stroke="#f2f2f2" stroke-width="1.6"/><circle cx="27" cy="27" r="5" fill="#5fbf49" stroke="#f2f2f2" stroke-width="1.5"/></svg>
<svg class="r" style="left:2575.00px;top:87.00px;" width="34" height="32" viewBox="0 0 34 32"><path d="M2 3 L22 3 L22 15 Q22 25 12 29 Q2 25 2 15 Z" fill="#b3b3b3"/><path d="M12 5 L20 5 L20 15 Q20 22 12 26 Z" fill="#d0d0d0"/><path d="M16 14 L32 23 L16 32 Z" fill="#b3b3b3" stroke="#f2f2f2" stroke-width="1.5"/></svg>
<svg class="r" style="left:2625.00px;top:86.00px;" width="36" height="34" viewBox="0 0 36 34"><circle cx="14" cy="14" r="11" fill="none" stroke="#b3b3b3" stroke-width="2.5"/><path d="M14 7 L14 14 L19 17" stroke="#b3b3b3" stroke-width="2.5" fill="none"/><path d="M17 15 L34 24 L17 33 Z" fill="#b3b3b3" stroke="#f2f2f2" stroke-width="1.5"/></svg>
<svg class="r" style="left:2670.00px;top:98.00px;" width="18" height="11" viewBox="0 0 18 11"><path d="M1 1 L17 1 L9 10 Z" fill="#6e6e6e"/></svg>
<div class="r" style="left:2714.00px;top:92.00px;width:20.50px;height:21.00px;background:#d35c5c;"></div>
<div class="r" style="left:2756.00px;top:82.00px;width:1.50px;height:44.00px;background:#cfcfcf;"></div>
<div class="t" style="left:2775.76px;top:102.94px;font-size:24.7px;color:#000;letter-spacing:0.025px;">Git:</div>
<svg class="r" style="left:2835.00px;top:88.00px;" width="28" height="28" viewBox="0 0 28 28"><path d="M24 3 L6 21" stroke="#3e8ed8" stroke-width="3.2"/><path d="M3 9 L3 24 L18 24" stroke="#3e8ed8" stroke-width="3.2" fill="none"/></svg>
<svg class="r" style="left:2886.00px;top:89.00px;" width="30" height="26" viewBox="0 0 30 26"><path d="M2 14 L10 22 L27 3" stroke="#5aa05a" stroke-width="3.6" fill="none"/></svg>
<svg class="r" style="left:2937.00px;top:88.00px;" width="28" height="28" viewBox="0 0 28 28"><path d="M4 25 L22 7" stroke="#5aa05a" stroke-width="3.2"/><path d="M9 4 L24 4 L24 19" stroke="#5aa05a" stroke-width="3.2" fill="none"/></svg>
<svg class="r" style="left:2988.00px;top:88.00px;" width="32" height="32" viewBox="0 0 32 32"><circle cx="15" cy="15" r="12" fill="none" stroke="#6e6e6e" stroke-width="3"/><path d="M15 8 L15 15 L20 19" stroke="#6e6e6e" stroke-width="2.6" fill="none"/></svg>
<svg class="r" style="left:3042.00px;top:89.00px;" width="30" height="28" viewBox="0 0 30 28"><path d="M8 4 L2 10 L8 16" stroke="#c3c3c3" stroke-width="2.6" fill="none"/><path d="M3 10 L17 10 Q26 10 26 18 Q26 26 17 26 L12 26" stroke="#c3c3c3" stroke-width="2.6" fill="none"/></svg>
<div class="r" style="left:3088.00px;top:82.00px;width:1.50px;height:44.00px;background:#cfcfcf;"></div>
<svg class="r" style="left:3106.00px;top:87.00px;" width="32" height="32" viewBox="0 0 32 32"><circle cx="12" cy="12" r="9" fill="none" stroke="#6e6e6e" stroke-width="3.2"/><path d="M19 19 L29 29" stroke="#6e6e6e" stroke-width="3.8"/></svg>
<svg class="r" style="left:3157.00px;top:86.00px;" width="34" height="34" viewBox="0 0 34 34"><circle cx="17" cy="17" r="16" fill="#3b8ad9"/><path d="M17 25 L17 10 M10 16 L17 9 L24 16" stroke="#fff" stroke-width="3" fill="none"/></svg>
<div class="r" style="left:648.00px;top:130.00px;width:2556.00px;height:1.50px;background:#d1d1d1;"></div>
<svg class="r" style="left:673.00px;top:145.00px;" width="30" height="27" viewBox="0 0 30 27"><rect x="1" y="1" width="27" height="23" fill="#b6bdc6"/><rect x="4" y="6" width="21" height="15" fill="#fff"/><rect x="5" y="7" width="19" height="13" fill="#a3d2ea"/></svg>
<div class="t" style="left:710.27px;top:159.24px;font-size:24.7px;color:#1a1a1a;letter-spacing:0.505px;">Project</div>
<svg class="r" style="left:823.00px;top:155.00px;" width="20" height="12" viewBox="0 0 20 12"><path d="M1 1 L19 1 L10 11 Z" fill="#6e6e6e"/></svg>
<svg class="r" style="left:1149.00px;top:143.00px;" width="30" height="30" viewBox="0 0 30 30"><circle cx="15" cy="15" r="12.3" fill="none" stroke="#757575" stroke-width="3.2"/><path d="M15 2 L15 11 M15 19 L15 28 M2 15 L11 15 M19 15 L28 15" stroke="#757575" stroke-width="3.4"/></svg>
<svg class="r" style="left:1202.00px;top:144.00px;" width="28" height="28" viewBox="0 0 28 28"><path d="M2 2 L26 2 M2 26 L26 26" stroke="#757575" stroke-width="3.6"/><path d="M8 11 L14 5 L20 11 Z M8 17 L14 23 L20 17 Z" fill="#6e6e6e"/></svg>
<svg class="r" style="left:1254.00px;top:144.00px;" width="28" height="28" viewBox="0 0 28 28"><path d="M2 14 L26 14" stroke="#757575" stroke-width="3.6"/><path d="M8 1 L20 1 L14 8 Z M8 27 L20 27 L14 20 Z" fill="#6e6e6e"/></svg>
<div class="r" style="left:1300.50px;top:139.00px;width:1.50px;height:38.00px;background:#cfcfcf;"></div>
<svg class="r" style="left:1321.00px;top:145.00px;" width="27" height="27" viewBox="0 0 27 27"><circle cx="13.5" cy="13.5" r="9.97" fill="#6e6e6e"/><rect x="10.70" y="0.21" width="5.61" height="6.23" rx="0.8" fill="#6e6e6e" transform="rotate(0 13.5 13.5)"/><rect x="10.70" y="0.21" width="5.61" height="6.23" rx="0.8" fill="#6e6e6e" transform="rotate(60 13.5 13.5)"/><rect x="10.70" y="0.21" width="5.61" height="6.23" rx="0.8" fill="#6e6e6e" transform="rotate(120 13.5 13.5)"/><rect x="10.70" y="0.21" width="5.61" height="6.23" rx="0.8" fill="#6e6e6e" transform="rotate(180 13.5 13.5)"/><rect x="10.70" y="0.21" width="5.61" height="6.23" rx="0.8" fill="#6e6e6e" transform="rotate(240 13.5 13.5)"/><rect x="10.70" y="0.21" width="5.61" height="6.23" rx="0.8" fill="#6e6e6e" transform="rotate(300 13.5 13.5)"/><circle cx="13.5" cy="13.5" r="4.57" fill="#f2f2f2"/></svg>
<div class="r" style="left:1374.00px;top:157.00px;width:25.00px;height:3.50px;background:#6e6e6e;"></div>
<div class="r" style="left:648.00px;top:184.00px;width:765.00px;height:2.00px;background:#d1d1d1;"></div>
<div class="r" style="left:1413.00px;top:131.00px;width:1791.00px;height:54.00px;background:#f2f2f2;"></div>
<div class="r" style="left:1916.00px;top:131.00px;width:366.00px;height:54.00px;background:#ffffff;"></div>
<div class="r" style="left:1916.00px;top:179.60px;width:366.00px;height:4.80px;background:#8e9bb3;"></div>
<div class="r" style="left:1413.00px;top:184.00px;width:1791.00px;height:1.50px;background:#d1d1d1;"></div>
<div class="t" style="left:1417.64px;top:158.12px;font-size:23.6px;color:#1a1a1a;letter-spacing:-0.096px;">toreLoader.java</div>
<div class="r" style="left:1414px;top:140px;width:22px;height:38px;background:linear-gradient(90deg,#f2f2f2 0%,rgba(242,242,242,0.75) 45%,rgba(242,242,242,0) 100%);"></div>
<svg class="r" style="left:1593.70px;top:150.00px;" width="16" height="16" viewBox="0 0 16 16"><path d="M1 1 L15 15 M15 1 L1 15" stroke="#9a9a9a" stroke-width="1.7"/></svg>
<svg class="r" style="left:1641.50px;top:144.50px;" width="28.8" height="28.8" viewBox="0 0 28.8 28.8"><circle cx="14.4" cy="14.4" r="13.9" fill="#9ccfe8"/><path d="M19.3,10.7 A6,6 0 1 0 19.3,18.1" fill="none" stroke="#3d3d3d" stroke-width="2.2"/></svg>
<div class="t" style="left:1681.53px;top:158.12px;font-size:23.6px;color:#1a1a1a;letter-spacing:-0.189px;">ServicesMain.java</div>
<svg class="r" style="left:1682.60px;top:170.50px;" width="189" height="5" viewBox="0 0 189 5"><polyline points="0.00,3.60 2.98,0.60 5.97,3.60 8.96,0.60 11.94,3.60 14.92,0.60 17.91,3.60 20.89,0.60 23.88,3.60 26.86,0.60 29.85,3.60 32.84,0.60 35.82,3.60 38.80,0.60 41.79,3.60 44.77,0.60 47.76,3.60 50.74,0.60 53.73,3.60 56.71,0.60 59.70,3.60 62.68,0.60 65.67,3.60 68.66,0.60 71.64,3.60 74.62,0.60 77.61,3.60 80.59,0.60 83.58,3.60 86.56,0.60 89.55,3.60 92.53,0.60 95.52,3.60 98.50,0.60 101.49,3.60 104.47,0.60 107.46,3.60 110.44,0.60 113.43,3.60 116.41,0.60 119.40,3.60 122.38,0.60 125.37,3.60 128.35,0.60 131.34,3.60 134.32,0.60 137.31,3.60 140.29,0.60 143.28,3.60 146.26,0.60 149.25,3.60 152.23,0.60 155.22,3.60 158.20,0.60 161.19,3.60 164.17,0.60 167.16,3.60 170.14,0.60 173.13,3.60 176.11,0.60 179.10,3.60 182.08,0.60 185.07,3.60" fill="none" stroke="#e8392c" stroke-width="1.6" stroke-linejoin="miter"/></svg>
<svg class="r" style="left:1885.00px;top:150.00px;" width="16" height="16" viewBox="0 0 16 16"><path d="M1 1 L15 15 M15 1 L1 15" stroke="#9a9a9a" stroke-width="1.7"/></svg>
<svg class="r" style="left:1933.50px;top:144.50px;" width="28.8" height="28.8" viewBox="0 0 28.8 28.8"><circle cx="14.4" cy="14.4" r="13.9" fill="#9ccfe8"/><path d="M19.3,10.7 A6,6 0 1 0 19.3,18.1" fill="none" stroke="#3d3d3d" stroke-width="2.2"/></svg>
<div class="t" style="left:1972.76px;top:158.12px;font-size:23.6px;color:#1a1a1a;letter-spacing:-0.071px;">NodeUpdateHandler.java</div>
<svg class="r" style="left:2249.00px;top:150.00px;" width="16" height="16" viewBox="0 0 16 16"><path d="M1 1 L15 15 M15 1 L1 15" stroke="#9a9a9a" stroke-width="1.7"/></svg>
<svg class="r" style="left:2299.00px;top:142.00px;" width="32" height="32" viewBox="0 0 32 32"><path d="M8 1 L15 1 L15 8 L8 8 Z" fill="#b0b6bf"/><path d="M2 9 L15 9 L15 15 L2 15 Z" fill="#b0b6bf"/><rect x="1" y="17" width="29" height="14" fill="#8cc6e6"/><text x="6" y="29" font-size="11" font-family="Liberation Sans" fill="#333">J</text></svg>
<div class="t" style="left:2336.43px;top:158.12px;font-size:23.6px;color:#1a1a1a;letter-spacing:0.107px;">module-info.java (com.hedera.node.app)</div>
<svg class="r" style="left:2338.00px;top:170.50px;" width="428" height="5" viewBox="0 0 428 5"><polyline points="0.00,3.60 2.98,0.60 5.97,3.60 8.96,0.60 11.94,3.60 14.92,0.60 17.91,3.60 20.89,0.60 23.88,3.60 26.86,0.60 29.85,3.60 32.84,0.60 35.82,3.60 38.80,0.60 41.79,3.60 44.77,0.60 47.76,3.60 50.74,0.60 53.73,3.60 56.71,0.60 59.70,3.60 62.68,0.60 65.67,3.60 68.66,0.60 71.64,3.60 74.62,0.60 77.61,3.60 80.59,0.60 83.58,3.60 86.56,0.60 89.55,3.60 92.53,0.60 95.52,3.60 98.50,0.60 101.49,3.60 104.47,0.60 107.46,3.60 110.44,0.60 113.43,3.60 116.41,0.60 119.40,3.60 122.38,0.60 125.37,3.60 128.35,0.60 131.34,3.60 134.32,0.60 137.31,3.60 140.29,0.60 143.28,3.60 146.26,0.60 149.25,3.60 152.23,0.60 155.22,3.60 158.20,0.60 161.19,3.60 164.17,0.60 167.16,3.60 170.14,0.60 173.13,3.60 176.11,0.60 179.10,3.60 182.08,0.60 185.07,3.60 188.05,0.60 191.04,3.60 194.03,0.60 197.01,3.60 200.00,0.60 202.98,3.60 205.97,0.60 208.95,3.60 211.94,0.60 214.92,3.60 217.91,0.60 220.89,3.60 223.88,0.60 226.86,3.60 229.84,0.60 232.83,3.60 235.81,0.60 238.80,3.60 241.78,0.60 244.77,3.60 247.75,0.60 250.74,3.60 253.72,0.60 256.71,3.60 259.69,0.60 262.68,3.60 265.66,0.60 268.65,3.60 271.63,0.60 274.62,3.60 277.60,0.60 280.59,3.60 283.57,0.60 286.56,3.60 289.55,0.60 292.53,3.60 295.51,0.60 298.50,3.60 301.49,0.60 304.47,3.60 307.45,0.60 310.44,3.60 313.43,0.60 316.41,3.60 319.39,0.60 322.38,3.60 325.37,0.60 328.35,3.60 331.33,0.60 334.32,3.60 337.31,0.60 340.29,3.60 343.27,0.60 346.26,3.60 349.25,0.60 352.23,3.60 355.21,0.60 358.20,3.60 361.19,0.60 364.17,3.60 367.15,0.60 370.14,3.60 373.12,0.60 376.11,3.60 379.09,0.60 382.08,3.60 385.06,0.60 388.05,3.60 391.03,0.60 394.02,3.60 397.00,0.60 399.99,3.60 402.97,0.60 405.96,3.60 408.94,0.60 411.93,3.60 414.91,0.60 417.90,3.60 420.88,0.60 423.87,3.60" fill="none" stroke="#e8392c" stroke-width="1.6" stroke-linejoin="miter"/></svg>
<svg class="r" style="left:2780.00px;top:150.00px;" width="16" height="16" viewBox="0 0 16 16"><path d="M1 1 L15 15 M15 1 L1 15" stroke="#9a9a9a" stroke-width="1.7"/></svg>
<svg class="r" style="left:2826.00px;top:142.00px;" width="32" height="30" viewBox="0 0 32 30"><path d="M2 26 Q1 14 8 11 Q14 9 20 12 Q22 6 26 5 Q30 6 29 10 L27 9 Q25 9 24 12 L24 20 L20 20 L20 24 L16 24 L16 20 L10 20 L10 26 Z" fill="#a3aab4"/><path d="M17 15 L31 15 L24 22 L31 29 L17 29 Z" fill="#b99bf3"/></svg>
<div class="t" style="left:2866.48px;top:158.12px;font-size:23.6px;color:#1a1a1a;letter-spacing:0.496px;">build.gradle.kts (:app</div>
<div class="t" style="left:3095.00px;top:158.12px;font-size:23.6px;color:#bdbdbd;">)</div>
<svg class="r" style="left:3118.00px;top:150.00px;" width="22" height="14" viewBox="0 0 22 14"><path d="M2 2 L11 11 L20 2" stroke="#6e6e6e" stroke-width="2.6" fill="none"/></svg>
<svg class="r" style="left:3175.00px;top:145.00px;" width="8" height="26" viewBox="0 0 8 26"><circle cx="4" cy="4" r="3.2" fill="#6e6e6e"/><circle cx="4" cy="13" r="3.2" fill="#6e6e6e"/><circle cx="4" cy="22" r="3.2" fill="#6e6e6e"/></svg>
<div class="r" style="left:648.00px;top:186.00px;width:736.00px;height:1274.00px;background:#ffffff;"></div>
<div class="r" style="left:648.00px;top:194.00px;width:736.00px;height:40.00px;background:#fefde7;"></div>
<div class="r" style="left:648.00px;top:514.00px;width:736.00px;height:40.00px;background:#d5d5d5;"></div>
<div class="clip" style="left:648px;top:186px;width:736px;height:1274px;"><div style="position:absolute;left:-648px;top:-186px;width:3204px;height:1910px">
<div class="r" style="left:788.00px;top:186.00px;width:12.00px;height:8.00px;background:#5fb1df;"></div>
<svg class="r" style="left:806.00px;top:189.50px;" width="150" height="5" viewBox="0 0 150 5"><polyline points="0.00,3.60 2.98,0.60 5.97,3.60 8.96,0.60 11.94,3.60 14.92,0.60 17.91,3.60 20.89,0.60 23.88,3.60 26.86,0.60 29.85,3.60 32.84,0.60 35.82,3.60 38.80,0.60 41.79,3.60 44.77,0.60 47.76,3.60 50.74,0.60 53.73,3.60 56.71,0.60 59.70,3.60 62.68,0.60 65.67,3.60 68.66,0.60 71.64,3.60 74.62,0.60 77.61,3.60 80.59,0.60 83.58,3.60 86.56,0.60 89.55,3.60 92.53,0.60 95.52,3.60 98.50,0.60 101.49,3.60 104.47,0.60 107.46,3.60 110.44,0.60 113.43,3.60 116.41,0.60 119.40,3.60 122.38,0.60 125.37,3.60 128.35,0.60 131.34,3.60 134.32,0.60 137.31,3.60 140.29,0.60 143.28,3.60 146.26,0.60" fill="none" stroke="#e8392c" stroke-width="1.6" stroke-linejoin="miter"/></svg>
<div class="r" style="left:916.00px;top:186.00px;width:4.00px;height:4.00px;background:#111;"></div>
<div class="r" style="left:933.00px;top:186.00px;width:4.00px;height:4.00px;background:#111;"></div>
<div class="r" style="left:954.00px;top:186.00px;width:8.00px;height:4.00px;background:#111;"></div>
<div class="r" style="left:973.00px;top:186.00px;width:4.00px;height:4.00px;background:#111;"></div>
<div class="r" style="left:993.00px;top:186.00px;width:5.00px;height:4.00px;background:#111;"></div>
<svg class="r" style="left:772.50px;top:204.10px;" width="11" height="19" viewBox="0 0 11 19"><path d="M1.5 1.5 L9.5 9.5 L1.5 17.5" stroke="#707070" stroke-width="2.5" fill="none"/></svg>
<svg class="r" style="left:806.00px;top:202.10px;" width="31" height="29" viewBox="0 0 31 29"><path d="M0 0 L11 0 L14 3 L28 3 L28 21 L0 21 Z" fill="#eba679"/></svg>
<div class="t" style="left:841.03px;top:214.63px;font-size:25.9px;color:#7b7a3a;letter-spacing:1.654px;">build</div>
<svg class="r" style="left:772.50px;top:244.10px;" width="11" height="19" viewBox="0 0 11 19"><path d="M1.5 1.5 L9.5 9.5 L1.5 17.5" stroke="#707070" stroke-width="2.5" fill="none"/></svg>
<svg class="r" style="left:806.00px;top:242.10px;" width="31" height="29" viewBox="0 0 31 29"><path d="M0 0 L11 0 L14 3 L28 3 L28 21 L0 21 Z" fill="#aeb5bd"/></svg>
<div class="t" style="left:841.61px;top:254.63px;font-size:25.9px;color:#000;letter-spacing:0.826px;">data</div>
<svg class="r" style="left:772.50px;top:284.10px;" width="11" height="19" viewBox="0 0 11 19"><path d="M1.5 1.5 L9.5 9.5 L1.5 17.5" stroke="#707070" stroke-width="2.5" fill="none"/></svg>
<svg class="r" style="left:806.00px;top:282.10px;" width="31" height="29" viewBox="0 0 31 29"><path d="M0 0 L11 0 L14 3 L28 3 L28 21 L0 21 Z" fill="#aeb5bd"/></svg>
<div class="t" style="left:842.33px;top:294.63px;font-size:25.9px;color:#000;letter-spacing:1.280px;">for-test</div>
<svg class="r" style="left:769.00px;top:327.60px;" width="19" height="11" viewBox="0 0 19 11"><path d="M1.5 1.5 L9.5 9.5 L17.5 1.5" stroke="#707070" stroke-width="2.5" fill="none"/></svg>
<svg class="r" style="left:806.00px;top:322.10px;" width="31" height="29" viewBox="0 0 31 29"><path d="M0 0 L11 0 L14 3 L28 3 L28 21 L0 21 Z" fill="#aeb5bd"/></svg>
<div class="t" style="left:841.98px;top:334.63px;font-size:25.9px;color:#000;letter-spacing:1.089px;">src</div>
<svg class="r" style="left:842.70px;top:348.10px;" width="37" height="5" viewBox="0 0 37 5"><polyline points="0.00,3.60 2.98,0.60 5.97,3.60 8.96,0.60 11.94,3.60 14.92,0.60 17.91,3.60 20.89,0.60 23.88,3.60 26.86,0.60 29.85,3.60 32.84,0.60" fill="none" stroke="#e8392c" stroke-width="1.6" stroke-linejoin="miter"/></svg>
<svg class="r" style="left:809.00px;top:364.10px;" width="11" height="19" viewBox="0 0 11 19"><path d="M1.5 1.5 L9.5 9.5 L1.5 17.5" stroke="#707070" stroke-width="2.5" fill="none"/></svg>
<svg class="r" style="left:842.00px;top:362.10px;" width="31" height="29" viewBox="0 0 31 29"><path d="M0 0 L9 0 L13 4 L28 4 L28 14 L17 14 L17 22 L0 22 Z" fill="#aeb5bd"/><rect x="18" y="16" width="12" height="12" fill="#60b1dc"/></svg>
<div class="t" style="left:879.40px;top:374.63px;font-size:25.9px;color:#000;font-weight:bold;letter-spacing:0.578px;">jmh</div>
<svg class="r" style="left:809.00px;top:404.10px;" width="11" height="19" viewBox="0 0 11 19"><path d="M1.5 1.5 L9.5 9.5 L1.5 17.5" stroke="#707070" stroke-width="2.5" fill="none"/></svg>
<svg class="r" style="left:842.00px;top:402.10px;" width="31" height="29" viewBox="0 0 31 29"><path d="M0 0 L9 0 L13 4 L28 4 L28 14 L17 14 L17 22 L0 22 Z" fill="#aeb5bd"/><rect x="18" y="16" width="12" height="12" fill="#60b1dc"/></svg>
<div class="t" style="left:877.29px;top:414.63px;font-size:25.9px;color:#000;font-weight:bold;letter-spacing:1.121px;">main</div>
<svg class="r" style="left:879.00px;top:428.10px;" width="62" height="5" viewBox="0 0 62 5"><polyline points="0.00,3.60 2.98,0.60 5.97,3.60 8.96,0.60 11.94,3.60 14.92,0.60 17.91,3.60 20.89,0.60 23.88,3.60 26.86,0.60 29.85,3.60 32.84,0.60 35.82,3.60 38.80,0.60 41.79,3.60 44.77,0.60 47.76,3.60 50.74,0.60 53.73,3.60 56.71,0.60 59.70,3.60" fill="none" stroke="#e8392c" stroke-width="1.6" stroke-linejoin="miter"/></svg>
<svg class="r" style="left:809.00px;top:444.10px;" width="11" height="19" viewBox="0 0 11 19"><path d="M1.5 1.5 L9.5 9.5 L1.5 17.5" stroke="#707070" stroke-width="2.5" fill="none"/></svg>
<svg class="r" style="left:842.00px;top:442.10px;" width="31" height="29" viewBox="0 0 31 29"><path d="M0 0 L9 0 L13 4 L28 4 L28 14 L17 14 L17 22 L0 22 Z" fill="#aeb5bd"/><rect x="18" y="16" width="12" height="12" fill="#60b1dc"/></svg>
<div class="t" style="left:878.68px;top:454.63px;font-size:25.9px;color:#000;font-weight:bold;letter-spacing:1.390px;">test</div>
<svg class="r" style="left:809.00px;top:484.10px;" width="11" height="19" viewBox="0 0 11 19"><path d="M1.5 1.5 L9.5 9.5 L1.5 17.5" stroke="#707070" stroke-width="2.5" fill="none"/></svg>
<svg class="r" style="left:842.00px;top:482.10px;" width="31" height="29" viewBox="0 0 31 29"><path d="M0 0 L9 0 L13 4 L28 4 L28 14 L17 14 L17 22 L0 22 Z" fill="#aeb5bd"/><rect x="18" y="16" width="12" height="12" fill="#60b1dc"/></svg>
<div class="t" style="left:878.68px;top:494.63px;font-size:25.9px;color:#000;font-weight:bold;letter-spacing:0.778px;">testFixtures</div>
<svg class="r" style="left:769.00px;top:527.60px;" width="19" height="11" viewBox="0 0 19 11"><path d="M1.5 1.5 L9.5 9.5 L17.5 1.5" stroke="#707070" stroke-width="2.5" fill="none"/></svg>
<svg class="r" style="left:806.00px;top:519.60px;" width="32" height="30" viewBox="0 0 32 30"><path d="M2 26 Q1 14 8 11 Q14 9 20 12 Q22 6 26 5 Q30 6 29 10 L27 9 Q25 9 24 12 L24 20 L20 20 L20 24 L16 24 L16 20 L10 20 L10 26 Z" fill="#a3aab4"/><path d="M17 15 L31 15 L24 22 L31 29 L17 29 Z" fill="#b99bf3"/></svg>
<div class="t" style="left:842.03px;top:534.63px;font-size:25.9px;color:#000;letter-spacing:0.813px;">build.gradle.kts</div>
<svg class="r" style="left:842.00px;top:560.60px;" width="29" height="29" viewBox="0 0 29 29"><circle cx="14.2" cy="14.2" r="14" fill="#f0ce8e"/><path d="M8.5 22 L14 11 M10.5 6.5 Q13 6 14.5 9 L20 22" stroke="#5a4a2e" stroke-width="2.1" fill="none"/></svg>
<div class="t" style="left:877.62px;top:574.63px;font-size:25.9px;color:#000;letter-spacing:0.676px;">&lt;expression&gt;</div>
<svg class="r" style="left:842.00px;top:600.60px;" width="29" height="29" viewBox="0 0 29 29"><rect x="0" y="0" width="28.4" height="28.4" rx="5" fill="#d7c9f6"/><path d="M9 9.5 L14.2 20 L19.4 9.5" stroke="#4f4f5a" stroke-width="2.1" fill="none"/></svg>
<div class="t" style="left:877.80px;top:614.63px;font-size:25.9px;color:#000;letter-spacing:0.478px;">cleanRun</div>
<svg class="r" style="left:842.00px;top:640.60px;" width="29" height="29" viewBox="0 0 29 29"><rect x="0" y="0" width="28.4" height="28.4" rx="5" fill="#d7c9f6"/><path d="M9 9.5 L14.2 20 L19.4 9.5" stroke="#4f4f5a" stroke-width="2.1" fill="none"/></svg>
<div class="t" style="left:877.80px;top:654.63px;font-size:25.9px;color:#000;letter-spacing:0.999px;">copyApp</div>
<svg class="r" style="left:842.00px;top:680.60px;" width="29" height="29" viewBox="0 0 29 29"><rect x="0" y="0" width="28.4" height="28.4" rx="5" fill="#d7c9f6"/><path d="M9 9.5 L14.2 20 L19.4 9.5" stroke="#4f4f5a" stroke-width="2.1" fill="none"/></svg>
<div class="t" style="left:877.80px;top:694.63px;font-size:25.9px;color:#000;letter-spacing:1.119px;">copyLib</div>
<svg class="r" style="left:842.00px;top:720.60px;" width="29" height="29" viewBox="0 0 29 29"><rect x="0" y="0" width="28.4" height="28.4" rx="5" fill="#d7c9f6"/><path d="M9 9.5 L14.2 20 L19.4 9.5" stroke="#4f4f5a" stroke-width="2.1" fill="none"/></svg>
<div class="t" style="left:877.80px;top:734.63px;font-size:25.9px;color:#000;letter-spacing:0.697px;">copyNodeData</div>
<svg class="r" style="left:842.00px;top:760.60px;" width="29" height="29" viewBox="0 0 29 29"><circle cx="14.2" cy="14.2" r="14" fill="#f0ce8e"/><path d="M8.5 22 L14 11 M10.5 6.5 Q13 6 14.5 9 L20 22" stroke="#5a4a2e" stroke-width="2.1" fill="none"/></svg>
<div class="t" style="left:877.81px;top:774.63px;font-size:25.9px;color:#000;letter-spacing:1.181px;">description</div>
<svg class="r" style="left:842.00px;top:800.60px;" width="29" height="29" viewBox="0 0 29 29"><circle cx="14.2" cy="14.2" r="14" fill="#f0ce8e"/><path d="M8.5 22 L14 11 M10.5 6.5 Q13 6 14.5 9 L20 22" stroke="#5a4a2e" stroke-width="2.1" fill="none"/></svg>
<div class="t" style="left:879.53px;top:814.63px;font-size:25.9px;color:#000;letter-spacing:0.614px;">jmhModuleInfo</div>
<svg class="r" style="left:842.00px;top:840.60px;" width="29" height="29" viewBox="0 0 29 29"><circle cx="14.2" cy="14.2" r="14" fill="#f0ce8e"/><path d="M8.5 22 L14 11 M10.5 6.5 Q13 6 14.5 9 L20 22" stroke="#5a4a2e" stroke-width="2.1" fill="none"/></svg>
<div class="t" style="left:877.18px;top:854.63px;font-size:25.9px;color:#000;letter-spacing:0.724px;">mainModuleInfo</div>
<svg class="r" style="left:842.00px;top:880.60px;" width="29" height="29" viewBox="0 0 29 29"><rect x="0" y="0" width="28.4" height="28.4" rx="5" fill="#d7c9f6"/><path d="M9 9.5 L14.2 20 L19.4 9.5" stroke="#4f4f5a" stroke-width="2.1" fill="none"/></svg>
<div class="t" style="left:877.18px;top:894.63px;font-size:25.9px;color:#000;letter-spacing:0.740px;">nodeWorkingDir</div>
<svg class="r" style="left:842.00px;top:920.60px;" width="29" height="29" viewBox="0 0 29 29"><circle cx="14.2" cy="14.2" r="14" fill="#f0ce8e"/><path d="M8.5 22 L14 11 M10.5 6.5 Q13 6 14.5 9 L20 22" stroke="#5a4a2e" stroke-width="2.1" fill="none"/></svg>
<div class="t" style="left:877.23px;top:934.63px;font-size:25.9px;color:#000;letter-spacing:1.171px;">plugins</div>
<svg class="r" style="left:842.00px;top:960.60px;" width="29" height="29" viewBox="0 0 29 29"><circle cx="14.2" cy="14.2" r="14" fill="#f0ce8e"/><path d="M8.5 22 L14 11 M10.5 6.5 Q13 6 14.5 9 L20 22" stroke="#5a4a2e" stroke-width="2.1" fill="none"/></svg>
<div class="t" style="left:878.51px;top:974.63px;font-size:25.9px;color:#000;letter-spacing:0.794px;">tasks</div>
<svg class="r" style="left:842.00px;top:1000.60px;" width="29" height="29" viewBox="0 0 29 29"><circle cx="14.2" cy="14.2" r="14" fill="#f0ce8e"/><path d="M8.5 22 L14 11 M10.5 6.5 Q13 6 14.5 9 L20 22" stroke="#5a4a2e" stroke-width="2.1" fill="none"/></svg>
<div class="t" style="left:878.51px;top:1014.63px;font-size:25.9px;color:#000;letter-spacing:0.794px;">tasks</div>
<svg class="r" style="left:842.00px;top:1040.60px;" width="29" height="29" viewBox="0 0 29 29"><circle cx="14.2" cy="14.2" r="14" fill="#f0ce8e"/><path d="M8.5 22 L14 11 M10.5 6.5 Q13 6 14.5 9 L20 22" stroke="#5a4a2e" stroke-width="2.1" fill="none"/></svg>
<div class="t" style="left:878.51px;top:1054.63px;font-size:25.9px;color:#000;letter-spacing:0.794px;">tasks</div>
<svg class="r" style="left:842.00px;top:1080.60px;" width="29" height="29" viewBox="0 0 29 29"><circle cx="14.2" cy="14.2" r="14" fill="#f0ce8e"/><path d="M8.5 22 L14 11 M10.5 6.5 Q13 6 14.5 9 L20 22" stroke="#5a4a2e" stroke-width="2.1" fill="none"/></svg>
<div class="t" style="left:878.51px;top:1094.63px;font-size:25.9px;color:#000;letter-spacing:0.794px;">tasks</div>
<svg class="r" style="left:842.00px;top:1120.60px;" width="29" height="29" viewBox="0 0 29 29"><circle cx="14.2" cy="14.2" r="14" fill="#f0ce8e"/><path d="M8.5 22 L14 11 M10.5 6.5 Q13 6 14.5 9 L20 22" stroke="#5a4a2e" stroke-width="2.1" fill="none"/></svg>
<div class="t" style="left:878.51px;top:1134.63px;font-size:25.9px;color:#000;letter-spacing:0.794px;">tasks</div>
<svg class="r" style="left:842.00px;top:1160.60px;" width="29" height="29" viewBox="0 0 29 29"><circle cx="14.2" cy="14.2" r="14" fill="#f0ce8e"/><path d="M8.5 22 L14 11 M10.5 6.5 Q13 6 14.5 9 L20 22" stroke="#5a4a2e" stroke-width="2.1" fill="none"/></svg>
<div class="t" style="left:878.51px;top:1174.63px;font-size:25.9px;color:#000;letter-spacing:0.794px;">tasks</div>
<svg class="r" style="left:842.00px;top:1200.60px;" width="29" height="29" viewBox="0 0 29 29"><circle cx="14.2" cy="14.2" r="14" fill="#f0ce8e"/><path d="M8.5 22 L14 11 M10.5 6.5 Q13 6 14.5 9 L20 22" stroke="#5a4a2e" stroke-width="2.1" fill="none"/></svg>
<div class="t" style="left:878.51px;top:1214.63px;font-size:25.9px;color:#000;letter-spacing:0.794px;">tasks</div>
<svg class="r" style="left:842.00px;top:1240.60px;" width="29" height="29" viewBox="0 0 29 29"><circle cx="14.2" cy="14.2" r="14" fill="#f0ce8e"/><path d="M8.5 22 L14 11 M10.5 6.5 Q13 6 14.5 9 L20 22" stroke="#5a4a2e" stroke-width="2.1" fill="none"/></svg>
<div class="t" style="left:878.51px;top:1254.63px;font-size:25.9px;color:#000;letter-spacing:0.794px;">tasks</div>
<svg class="r" style="left:842.00px;top:1280.60px;" width="29" height="29" viewBox="0 0 29 29"><circle cx="14.2" cy="14.2" r="14" fill="#f0ce8e"/><path d="M8.5 22 L14 11 M10.5 6.5 Q13 6 14.5 9 L20 22" stroke="#5a4a2e" stroke-width="2.1" fill="none"/></svg>
<div class="t" style="left:878.51px;top:1294.63px;font-size:25.9px;color:#000;letter-spacing:0.794px;">tasks</div>
<svg class="r" style="left:842.00px;top:1320.60px;" width="29" height="29" viewBox="0 0 29 29"><circle cx="14.2" cy="14.2" r="14" fill="#f0ce8e"/><path d="M8.5 22 L14 11 M10.5 6.5 Q13 6 14.5 9 L20 22" stroke="#5a4a2e" stroke-width="2.1" fill="none"/></svg>
<div class="t" style="left:878.51px;top:1334.63px;font-size:25.9px;color:#000;letter-spacing:0.891px;">testModuleInfo</div>
<svg class="r" style="left:842.00px;top:1360.60px;" width="29" height="29" viewBox="0 0 29 29"><circle cx="14.2" cy="14.2" r="14" fill="#d7c9f6"/><path d="M9 9.5 L14.2 20 L19.4 9.5" stroke="#4f4f5a" stroke-width="2.1" fill="none"/></svg>
<div class="t" style="left:877.22px;top:1374.63px;font-size:25.9px;color:#000;letter-spacing:0.378px;">updateDockerEnvTask</div>
<svg class="r" style="left:736.50px;top:1404.10px;" width="11" height="19" viewBox="0 0 11 19"><path d="M1.5 1.5 L9.5 9.5 L1.5 17.5" stroke="#707070" stroke-width="2.5" fill="none"/></svg>
<svg class="r" style="left:770.00px;top:1402.10px;" width="31" height="29" viewBox="0 0 31 29"><path d="M0 0 L9 0 L13 4 L28 4 L28 14 L17 14 L17 22 L0 22 Z" fill="#aeb5bd"/><rect x="18" y="16" width="12" height="12" fill="#60b1dc"/></svg>
<div class="t" style="left:805.50px;top:1414.63px;font-size:25.9px;color:#000;letter-spacing:1.217px;">hedera-app-spi</div>
<div class="t" style="left:1003.25px;top:1414.63px;font-size:25.9px;color:#000;font-weight:bold;letter-spacing:1.333px;">[app-spi]</div>
<svg class="r" style="left:736.50px;top:1444.10px;" width="11" height="19" viewBox="0 0 11 19"><path d="M1.5 1.5 L9.5 9.5 L1.5 17.5" stroke="#707070" stroke-width="2.5" fill="none"/></svg>
<svg class="r" style="left:770.00px;top:1442.10px;" width="31" height="29" viewBox="0 0 31 29"><path d="M0 0 L9 0 L13 4 L28 4 L28 14 L17 14 L17 22 L0 22 Z" fill="#aeb5bd"/><rect x="18" y="16" width="12" height="12" fill="#60b1dc"/></svg>
<div class="t" style="left:805.50px;top:1454.63px;font-size:25.9px;color:#000;letter-spacing:1.131px;">hedera-config</div>
<div class="t" style="left:986.15px;top:1454.63px;font-size:25.9px;color:#000;font-weight:bold;letter-spacing:0.938px;">[config]</div>
</div></div>
<div class="r" style="left:1384.00px;top:186.00px;width:29.00px;height:1274.00px;background:#f4f4f4;"></div>
<div class="r" style="left:1391px;top:518px;width:14px;height:389px;background:#c4c4c4;border-radius:7px;"></div>
<div class="r" style="left:1384.00px;top:477.00px;width:28.00px;height:4.00px;background:#c8524e;"></div>
<div class="r" style="left:1384.00px;top:559.50px;width:28.00px;height:4.00px;background:#c8524e;"></div>
<div class="r" style="left:1384.00px;top:967.00px;width:28.00px;height:4.00px;background:#c8524e;"></div>
<div class="r" style="left:1384.00px;top:1183.50px;width:28.00px;height:4.00px;background:#c8524e;"></div>
<div class="r" style="left:1412.00px;top:131.00px;width:2.00px;height:1330.00px;background:#d1d1d1;"></div>
<div class="r" style="left:1414.00px;top:185.50px;width:1790.00px;height:1246.50px;background:#ffffff;"></div>
<div class="r" style="left:1414.00px;top:275.00px;width:132.00px;height:1185.00px;background:#f3f3f3;"></div>
<div class="r" style="left:1414.00px;top:514.00px;width:132.00px;height:44.00px;background:#fcfaee;"></div>
<div class="r" style="left:1546.00px;top:514.00px;width:1658.00px;height:44.00px;background:#2d54a3;"></div>
<div class="r" style="left:1545.50px;top:275.00px;width:1.60px;height:1185.00px;background:#dcdcdc;"></div>
<div class="r" style="left:1547.20px;top:1432.00px;width:1656.80px;height:28.00px;background:#f3f3f3;"></div>
<div class="r" style="left:1565px;top:1441px;width:1324px;height:12px;background:#c6c6c6;border-radius:6px;"></div>
<div class="r" style="left:1617.00px;top:275.00px;width:1.60px;height:63.00px;background:#e4e4e4;"></div>
<div class="r" style="left:1617.00px;top:558.00px;width:1.60px;height:874.00px;background:#e4e4e4;"></div>
<div class="r" style="left:1617.00px;top:514.00px;width:1.60px;height:44.00px;background:#5a78b5;"></div>
<div class="r" style="left:1679.50px;top:275.00px;width:1.60px;height:20.00px;background:#e4e4e4;"></div>
<div class="r" style="left:1678.20px;top:1042.00px;width:1.60px;height:88.00px;background:#e4e4e4;"></div>
<div class="r" style="left:1678.20px;top:1262.00px;width:1.60px;height:43.60px;background:#e4e4e4;"></div>
<div class="r" style="left:1678.20px;top:1394.00px;width:1.60px;height:38.00px;background:#e4e4e4;"></div>
<div class="clip" style="left:1414px;top:275px;width:1790px;height:1157px;"><div style="position:absolute;left:-1414px;top:-275px;width:3204px;height:1910px">
<div class="t" style="left:1423.70px;top:274.98px;font-family:'Liberation Mono', monospace;font-size:26.0px;letter-spacing:-1.453px;color:#a4a4a4;">100</div>
<div class="t" style="left:1557.24px;top:274.72px;font-family:'Liberation Mono', monospace;font-size:27.0px;letter-spacing:-0.603px;"><span style="color:#080808;">            </span><span style="color:#080808;font-style:italic;">validateFalsePreCheck</span><span style="color:#080808;">(</span><span style="color:#080808;">op</span><span style="color:#080808;">.</span><span style="color:#080808;">hasAccountId</span><span style="color:#080808;">(</span><span style="color:#080808;">)</span><span style="color:#080808;">,</span><span style="color:#080808;"> </span><span style="color:#871094;font-style:italic;">UPDATE_NODE_ACCOUNT_NOT_ALLOWED</span><span style="color:#080808;">)</span><span style="color:#080808;">;</span></div>
<div class="t" style="left:1423.36px;top:318.98px;font-family:'Liberation Mono', monospace;font-size:26.0px;letter-spacing:-1.453px;color:#a4a4a4;">101</div>
<div class="t" style="left:1557.24px;top:318.72px;font-family:'Liberation Mono', monospace;font-size:27.0px;letter-spacing:-0.603px;"><span style="color:#080808;">        </span><span style="color:#080808;">}</span></div>
<div class="t" style="left:1423.94px;top:362.98px;font-family:'Liberation Mono', monospace;font-size:26.0px;letter-spacing:-1.453px;color:#a4a4a4;">102</div>
<div class="t" style="left:1557.24px;top:362.72px;font-family:'Liberation Mono', monospace;font-size:27.0px;letter-spacing:-0.603px;"><span style="color:#080808;">    </span><span style="color:#080808;">}</span></div>
<div class="t" style="left:1423.75px;top:406.98px;font-family:'Liberation Mono', monospace;font-size:26.0px;letter-spacing:-1.453px;color:#a4a4a4;">103</div>
<div class="t" style="left:1557.24px;top:406.72px;font-family:'Liberation Mono', monospace;font-size:27.0px;letter-spacing:-0.603px;"></div>
<div class="t" style="left:1423.42px;top:450.98px;font-family:'Liberation Mono', monospace;font-size:26.0px;letter-spacing:-1.453px;color:#a4a4a4;">104</div>
<div class="t" style="left:1557.24px;top:450.72px;font-family:'Liberation Mono', monospace;font-size:27.0px;letter-spacing:-0.603px;"><span style="color:#080808;">    </span><span style="color:#9e880d;">@Override</span></div>
<div class="t" style="left:1423.75px;top:494.98px;font-family:'Liberation Mono', monospace;font-size:26.0px;letter-spacing:-1.453px;color:#a4a4a4;">105</div>
<div class="t" style="left:1557.24px;top:494.72px;font-family:'Liberation Mono', monospace;font-size:27.0px;letter-spacing:-0.603px;"><span style="color:#080808;">    </span><span style="color:#0033b3;">public</span><span style="color:#080808;"> </span><span style="color:#0033b3;">void</span><span style="color:#080808;"> </span><span style="color:#00627a;">handle</span><span style="color:#080808;">(</span><span style="color:#9e880d;">@NonNull</span><span style="color:#080808;"> </span><span style="color:#0033b3;">final</span><span style="color:#080808;"> </span><span style="color:#080808;">HandleContext</span><span style="color:#080808;"> </span><span style="color:#080808;">handleContext</span><span style="color:#080808;">)</span><span style="color:#080808;"> </span><span style="color:#080808;">{</span></div>
<div class="t" style="left:2659.00px;top:494.72px;font-size:27.0px;color:#8c8c8c;font-family:'Liberation Mono', monospace;font-style:italic;letter-spacing:-0.603px;">handleContext: DispatchHandleContex</div>
<div class="t" style="left:1423.79px;top:538.98px;font-family:'Liberation Mono', monospace;font-size:26.0px;letter-spacing:-1.453px;color:#a4a4a4;">106</div>
<div class="t" style="left:1557.24px;top:538.72px;font-family:'Liberation Mono', monospace;font-size:27.0px;letter-spacing:-0.603px;"><span style="color:#ffffff;">        </span><span style="color:#ffffff;font-style:italic;">requireNonNull</span><span style="color:#ffffff;">(</span><span style="color:#ffffff;">handleContext</span><span style="color:#ffffff;">)</span><span style="color:#ffffff;">;</span></div>
<div class="t" style="left:2190.00px;top:538.72px;font-size:27.0px;color:#a9b6d6;font-family:'Liberation Mono', monospace;font-style:italic;letter-spacing:-0.603px;">handleContext: DispatchHandleContext@13680</div>
<div class="t" style="left:1424.13px;top:582.98px;font-family:'Liberation Mono', monospace;font-size:26.0px;letter-spacing:-1.453px;color:#a4a4a4;">107</div>
<div class="t" style="left:1557.24px;top:582.72px;font-family:'Liberation Mono', monospace;font-size:27.0px;letter-spacing:-0.603px;"><span style="color:#080808;">        </span><span style="color:#0033b3;">final</span><span style="color:#080808;"> </span><span style="color:#0033b3;">var</span><span style="color:#080808;"> </span><span style="color:#080808;">op</span><span style="color:#080808;"> </span><span style="color:#080808;">=</span><span style="color:#080808;"> </span><span style="color:#080808;">handleContext</span><span style="color:#080808;">.</span><span style="color:#080808;">body</span><span style="color:#080808;">(</span><span style="color:#080808;">)</span><span style="color:#080808;">.</span><span style="color:#080808;">nodeUpdateOrThrow</span><span style="color:#080808;">(</span><span style="color:#080808;">)</span><span style="color:#080808;">;</span></div>
<div class="t" style="left:1423.81px;top:626.98px;font-family:'Liberation Mono', monospace;font-size:26.0px;letter-spacing:-1.453px;color:#a4a4a4;">108</div>
<div class="t" style="left:1557.24px;top:626.72px;font-family:'Liberation Mono', monospace;font-size:27.0px;letter-spacing:-0.603px;"></div>
<div class="t" style="left:1423.90px;top:670.98px;font-family:'Liberation Mono', monospace;font-size:26.0px;letter-spacing:-1.453px;color:#a4a4a4;">109</div>
<div class="t" style="left:1557.24px;top:670.72px;font-family:'Liberation Mono', monospace;font-size:27.0px;letter-spacing:-0.603px;"><span style="color:#080808;">        </span><span style="color:#0033b3;">final</span><span style="color:#080808;"> </span><span style="color:#0033b3;">var</span><span style="color:#080808;"> </span><span style="color:#080808;">configuration</span><span style="color:#080808;"> </span><span style="color:#080808;">=</span><span style="color:#080808;"> </span><span style="color:#080808;">handleContext</span><span style="color:#080808;">.</span><span style="color:#080808;">configuration</span><span style="color:#080808;">(</span><span style="color:#080808;">)</span><span style="color:#080808;">;</span></div>
<div class="t" style="left:1423.70px;top:714.98px;font-family:'Liberation Mono', monospace;font-size:26.0px;letter-spacing:-1.453px;color:#a4a4a4;">110</div>
<div class="t" style="left:1557.24px;top:714.72px;font-family:'Liberation Mono', monospace;font-size:27.0px;letter-spacing:-0.603px;"><span style="color:#080808;">        </span><span style="color:#0033b3;">final</span><span style="color:#080808;"> </span><span style="color:#0033b3;">var</span><span style="color:#080808;"> </span><span style="color:#080808;">nodeConfig</span><span style="color:#080808;"> </span><span style="color:#080808;">=</span><span style="color:#080808;"> </span><span style="color:#080808;">configuration</span><span style="color:#080808;">.</span><span style="color:#080808;">getConfigData</span><span style="color:#080808;">(</span><span style="color:#080808;">NodesConfig</span><span style="color:#080808;">.</span><span style="color:#0033b3;">class</span><span style="color:#080808;">)</span><span style="color:#080808;">;</span></div>
<div class="t" style="left:1423.36px;top:758.98px;font-family:'Liberation Mono', monospace;font-size:26.0px;letter-spacing:-1.453px;color:#a4a4a4;">111</div>
<div class="t" style="left:1557.24px;top:758.72px;font-family:'Liberation Mono', monospace;font-size:27.0px;letter-spacing:-0.603px;"><span style="color:#080808;">        </span><span style="color:#0033b3;">final</span><span style="color:#080808;"> </span><span style="color:#0033b3;">var</span><span style="color:#080808;"> </span><span style="color:#080808;">storeFactory</span><span style="color:#080808;"> </span><span style="color:#080808;">=</span><span style="color:#080808;"> </span><span style="color:#080808;">handleContext</span><span style="color:#080808;">.</span><span style="color:#080808;">storeFactory</span><span style="color:#080808;">(</span><span style="color:#080808;">)</span><span style="color:#080808;">;</span></div>
<div class="t" style="left:1423.94px;top:802.98px;font-family:'Liberation Mono', monospace;font-size:26.0px;letter-spacing:-1.453px;color:#a4a4a4;">112</div>
<div class="t" style="left:1557.24px;top:802.72px;font-family:'Liberation Mono', monospace;font-size:27.0px;letter-spacing:-0.603px;"><span style="color:#080808;">        </span><span style="color:#0033b3;">final</span><span style="color:#080808;"> </span><span style="color:#0033b3;">var</span><span style="color:#080808;"> </span><span style="color:#080808;">nodeStore</span><span style="color:#080808;"> </span><span style="color:#080808;">=</span><span style="color:#080808;"> </span><span style="color:#080808;">storeFactory</span><span style="color:#080808;">.</span><span style="color:#080808;">writableStore</span><span style="color:#080808;">(</span><span style="color:#080808;">WritableNodeStore</span><span style="color:#080808;">.</span><span style="color:#0033b3;">class</span><span style="color:#080808;">)</span><span style="color:#080808;">;</span></div>
<div class="t" style="left:1423.75px;top:846.98px;font-family:'Liberation Mono', monospace;font-size:26.0px;letter-spacing:-1.453px;color:#a4a4a4;">113</div>
<div class="t" style="left:1557.24px;top:846.72px;font-family:'Liberation Mono', monospace;font-size:27.0px;letter-spacing:-0.603px;"><span style="color:#080808;">        </span><span style="color:#0033b3;">final</span><span style="color:#080808;"> </span><span style="color:#0033b3;">var</span><span style="color:#080808;"> </span><span style="color:#080808;">accountStore</span><span style="color:#080808;"> </span><span style="color:#080808;">=</span><span style="color:#080808;"> </span><span style="color:#080808;">storeFactory</span><span style="color:#080808;">.</span><span style="color:#080808;">readableStore</span><span style="color:#080808;">(</span><span style="color:#080808;">ReadableAccountStore</span><span style="color:#080808;">.</span><span style="color:#0033b3;">class</span><span style="color:#080808;">)</span><span style="color:#080808;">;</span></div>
<div class="t" style="left:1423.42px;top:890.98px;font-family:'Liberation Mono', monospace;font-size:26.0px;letter-spacing:-1.453px;color:#a4a4a4;">114</div>
<div class="t" style="left:1557.24px;top:890.72px;font-family:'Liberation Mono', monospace;font-size:27.0px;letter-spacing:-0.603px;"></div>
<div class="t" style="left:1423.75px;top:934.98px;font-family:'Liberation Mono', monospace;font-size:26.0px;letter-spacing:-1.453px;color:#a4a4a4;">115</div>
<div class="t" style="left:1557.24px;top:934.72px;font-family:'Liberation Mono', monospace;font-size:27.0px;letter-spacing:-0.603px;"><span style="color:#080808;">        </span><span style="color:#0033b3;">final</span><span style="color:#080808;"> </span><span style="color:#0033b3;">var</span><span style="color:#080808;"> </span><span style="color:#080808;">existingNode</span><span style="color:#080808;"> </span><span style="color:#080808;">=</span><span style="color:#080808;"> </span><span style="color:#080808;">nodeStore</span><span style="color:#080808;">.</span><span style="color:#080808;">get</span><span style="color:#080808;">(</span><span style="color:#080808;">op</span><span style="color:#080808;">.</span><span style="color:#080808;">nodeId</span><span style="color:#080808;">(</span><span style="color:#080808;">)</span><span style="color:#080808;">)</span><span style="color:#080808;">;</span></div>
<div class="t" style="left:1423.79px;top:978.98px;font-family:'Liberation Mono', monospace;font-size:26.0px;letter-spacing:-1.453px;color:#a4a4a4;">116</div>
<div class="t" style="left:1557.24px;top:978.72px;font-family:'Liberation Mono', monospace;font-size:27.0px;letter-spacing:-0.603px;"><span style="color:#080808;">        </span><span style="color:#080808;font-style:italic;">validateFalse</span><span style="color:#080808;">(</span></div>
<div class="r" style="left:1904px;top:957.5px;width:70px;height:36px;background:#f1f1f1;border-radius:7px;"></div>
<div class="t" style="left:1913.69px;top:977.28px;font-size:22px;color:#8a8a8a;letter-spacing:2.359px;">flag:</div>
<div class="t" style="left:1978.25px;top:978.72px;font-family:'Liberation Mono', monospace;font-size:27.0px;letter-spacing:-0.603px;"><span style="color:#080808;">existingNode</span><span style="color:#080808;"> </span><span style="color:#080808;">=</span><span style="color:#080808;">=</span><span style="color:#080808;"> </span><span style="color:#0033b3;">null</span><span style="color:#080808;">,</span><span style="color:#080808;"> </span><span style="color:#871094;font-style:italic;">INVALID_NODE_ID</span><span style="color:#080808;">)</span><span style="color:#080808;">;</span></div>
<div class="t" style="left:1424.13px;top:1022.98px;font-family:'Liberation Mono', monospace;font-size:26.0px;letter-spacing:-1.453px;color:#a4a4a4;">117</div>
<div class="t" style="left:1557.24px;top:1022.72px;font-family:'Liberation Mono', monospace;font-size:27.0px;letter-spacing:-0.603px;"><span style="color:#080808;">        </span><span style="color:#0033b3;">if</span><span style="color:#080808;"> </span><span style="color:#080808;">(</span><span style="color:#080808;">op</span><span style="color:#080808;">.</span><span style="color:#080808;">hasAccountId</span><span style="color:#080808;">(</span><span style="color:#080808;">)</span><span style="color:#080808;">)</span><span style="color:#080808;"> </span><span style="color:#080808;">{</span></div>
<div class="t" style="left:1423.81px;top:1066.98px;font-family:'Liberation Mono', monospace;font-size:26.0px;letter-spacing:-1.453px;color:#a4a4a4;">118</div>
<div class="t" style="left:1557.24px;top:1066.72px;font-family:'Liberation Mono', monospace;font-size:27.0px;letter-spacing:-0.603px;"><span style="color:#080808;">            </span><span style="color:#0033b3;">final</span><span style="color:#080808;"> </span><span style="color:#0033b3;">var</span><span style="color:#080808;"> </span><span style="color:#080808;">accountId</span><span style="color:#080808;"> </span><span style="color:#080808;">=</span><span style="color:#080808;"> </span><span style="color:#080808;">op</span><span style="color:#080808;">.</span><span style="color:#080808;">accountIdOrThrow</span><span style="color:#080808;">(</span><span style="color:#080808;">)</span><span style="color:#080808;">;</span></div>
<div class="t" style="left:1423.90px;top:1110.98px;font-family:'Liberation Mono', monospace;font-size:26.0px;letter-spacing:-1.453px;color:#a4a4a4;">119</div>
<div class="t" style="left:1557.24px;top:1110.72px;font-family:'Liberation Mono', monospace;font-size:27.0px;letter-spacing:-0.603px;"><span style="color:#080808;">            </span><span style="color:#080808;font-style:italic;">validateTrue</span><span style="color:#080808;">(</span><span style="color:#080808;">accountStore</span><span style="color:#080808;">.</span><span style="color:#080808;">contains</span><span style="color:#080808;">(</span><span style="color:#080808;">accountId</span><span style="color:#080808;">)</span><span style="color:#080808;">,</span><span style="color:#080808;"> </span><span style="color:#871094;font-style:italic;">INVALID_NODE_ACCOUNT_ID</span><span style="color:#080808;">)</span><span style="color:#080808;">;</span></div>
<div class="t" style="left:1423.70px;top:1154.98px;font-family:'Liberation Mono', monospace;font-size:26.0px;letter-spacing:-1.453px;color:#a4a4a4;">120</div>
<div class="t" style="left:1557.24px;top:1154.72px;font-family:'Liberation Mono', monospace;font-size:27.0px;letter-spacing:-0.603px;"><span style="color:#080808;">        </span><span style="color:#080808;">}</span></div>
<div class="t" style="left:1423.36px;top:1198.98px;font-family:'Liberation Mono', monospace;font-size:26.0px;letter-spacing:-1.453px;color:#a4a4a4;">121</div>
<div class="t" style="left:1557.24px;top:1198.72px;font-family:'Liberation Mono', monospace;font-size:27.0px;letter-spacing:-0.603px;"><span style="color:#080808;">        </span><span style="color:#0033b3;">if</span><span style="color:#080808;"> </span><span style="color:#080808;">(</span><span style="color:#080808;">op</span><span style="color:#080808;">.</span><span style="color:#080808;">hasDescription</span><span style="color:#080808;">(</span><span style="color:#080808;">)</span><span style="color:#080808;">)</span><span style="color:#080808;"> </span><span style="color:#871094;">addressBookValidator</span><span style="color:#080808;">.</span><span style="color:#080808;">validateDescription</span><span style="color:#080808;">(</span><span style="color:#080808;">op</span><span style="color:#080808;">.</span><span style="color:#080808;">description</span><span style="color:#080808;">(</span><span style="color:#080808;">)</span><span style="color:#080808;">,</span><span style="color:#080808;"> </span><span style="color:#080808;">nodeConfig</span><span style="color:#080808;">)</span><span style="color:#080808;">;</span></div>
<div class="t" style="left:1423.94px;top:1242.98px;font-family:'Liberation Mono', monospace;font-size:26.0px;letter-spacing:-1.453px;color:#a4a4a4;">122</div>
<div class="t" style="left:1557.24px;top:1242.72px;font-family:'Liberation Mono', monospace;font-size:27.0px;letter-spacing:-0.603px;"><span style="color:#080808;">        </span><span style="color:#0033b3;">if</span><span style="color:#080808;"> </span><span style="color:#080808;">(</span><span style="color:#080808;">!</span><span style="color:#080808;">op</span><span style="color:#080808;">.</span><span style="color:#080808;">gossipEndpoint</span><span style="color:#080808;">(</span><span style="color:#080808;">)</span><span style="color:#080808;">.</span><span style="color:#080808;">isEmpty</span><span style="color:#080808;">(</span><span style="color:#080808;">)</span><span style="color:#080808;">)</span><span style="color:#080808;"> </span><span style="color:#080808;">{</span></div>
<div class="t" style="left:1423.75px;top:1286.98px;font-family:'Liberation Mono', monospace;font-size:26.0px;letter-spacing:-1.453px;color:#a4a4a4;">123</div>
<div class="t" style="left:1557.24px;top:1286.72px;font-family:'Liberation Mono', monospace;font-size:27.0px;letter-spacing:-0.603px;"><span style="color:#080808;">            </span><span style="color:#871094;">addressBookValidator</span><span style="color:#080808;">.</span><span style="color:#080808;">validateGossipEndpoint</span><span style="color:#080808;">(</span><span style="color:#080808;">op</span><span style="color:#080808;">.</span><span style="color:#080808;">gossipEndpoint</span><span style="color:#080808;">(</span><span style="color:#080808;">)</span><span style="color:#080808;">,</span><span style="color:#080808;"> </span><span style="color:#080808;">nodeConfig</span><span style="color:#080808;">)</span><span style="color:#080808;">;</span></div>
<div class="t" style="left:1423.42px;top:1330.98px;font-family:'Liberation Mono', monospace;font-size:26.0px;letter-spacing:-1.453px;color:#a4a4a4;">124</div>
<div class="t" style="left:1557.24px;top:1330.72px;font-family:'Liberation Mono', monospace;font-size:27.0px;letter-spacing:-0.603px;"><span style="color:#080808;">        </span><span style="color:#080808;">}</span></div>
<div class="t" style="left:1423.75px;top:1374.98px;font-family:'Liberation Mono', monospace;font-size:26.0px;letter-spacing:-1.453px;color:#a4a4a4;">125</div>
<div class="t" style="left:1557.24px;top:1374.72px;font-family:'Liberation Mono', monospace;font-size:27.0px;letter-spacing:-0.603px;"><span style="color:#080808;">        </span><span style="color:#0033b3;">if</span><span style="color:#080808;"> </span><span style="color:#080808;">(</span><span style="color:#080808;">!</span><span style="color:#080808;">op</span><span style="color:#080808;">.</span><span style="color:#080808;">serviceEndpoint</span><span style="color:#080808;">(</span><span style="color:#080808;">)</span><span style="color:#080808;">.</span><span style="color:#080808;">isEmpty</span><span style="color:#080808;">(</span><span style="color:#080808;">)</span><span style="color:#080808;">)</span><span style="color:#080808;"> </span><span style="color:#080808;">{</span></div>
<div class="t" style="left:1423.79px;top:1418.98px;font-family:'Liberation Mono', monospace;font-size:26.0px;letter-spacing:-1.453px;color:#a4a4a4;">126</div>
<div class="t" style="left:1557.24px;top:1418.72px;font-family:'Liberation Mono', monospace;font-size:27.0px;letter-spacing:-0.603px;"><span style="color:#080808;">            </span><span style="color:#871094;">addressBookValidator</span><span style="color:#080808;">.</span><span style="color:#080808;">validateServiceEndpoint</span><span style="color:#080808;">(</span><span style="color:#080808;">op</span><span style="color:#080808;">.</span><span style="color:#080808;">serviceEndpoint</span><span style="color:#080808;">(</span><span style="color:#080808;">)</span><span style="color:#080808;">,</span><span style="color:#080808;"> </span><span style="color:#080808;">nodeConfig</span><span style="color:#080808;">)</span><span style="color:#080808;">;</span></div>
<div class="t" style="left:1424.13px;top:1462.98px;font-family:'Liberation Mono', monospace;font-size:26.0px;letter-spacing:-1.453px;color:#a4a4a4;">127</div>
<div class="t" style="left:1557.24px;top:1462.72px;font-family:'Liberation Mono', monospace;font-size:27.0px;letter-spacing:-0.603px;"><span style="color:#080808;">        </span><span style="color:#080808;">}</span></div>
</div></div>
<div class="clip" style="left:1414px;top:1432px;width:132px;height:28px;"><div style="position:absolute;left:-1414px;top:-1432px;width:3204px;height:1910px">
<div class="t" style="left:1424.13px;top:1462.98px;font-family:'Liberation Mono', monospace;font-size:26.0px;letter-spacing:-1.453px;color:#a4a4a4;">127</div>
</div></div>
<svg class="r" style="left:1481.50px;top:482.00px;" width="20" height="20" viewBox="0 0 20 20"><circle cx="10" cy="10" r="9.2" fill="#8fc577"/><path d="M6.5 5 L13.5 5 M10 5 L10 15 M6.5 15 L13.5 15" stroke="#2f3a2c" stroke-width="2"/></svg>
<svg class="r" style="left:1497.00px;top:480.00px;" width="14" height="26" viewBox="0 0 14 26"><path d="M7 25 L7 4" stroke="#d2575a" stroke-width="2.4"/><path d="M1 5 L7 0 L13 5 Z" fill="#d2575a"/></svg>
<svg class="r" style="left:1488.00px;top:521.00px;" width="28" height="30" viewBox="0 0 28 30"><circle cx="13.6" cy="15.6" r="12.6" fill="#cc5f61"/><path d="M8.5 9.5 L14.5 15 L24 5" stroke="#fcfaee" stroke-width="6" fill="none"/><path d="M10 10 L14.5 14 L23.5 5" stroke="#5f5f5f" stroke-width="3.2" fill="none"/></svg>
<svg class="r" style="left:1536.00px;top:301.90px;" width="21" height="26" viewBox="0 0 21 26"><path d="M2 11 L10.5 2 L19 11 L19 24 L2 24 Z" fill="#ffffff" stroke="#d2d2d2" stroke-width="1.6"/><path d="M6 16 L15 16" stroke="#c8c8c8" stroke-width="1.6"/></svg>
<svg class="r" style="left:1536.00px;top:345.90px;" width="21" height="26" viewBox="0 0 21 26"><path d="M2 11 L10.5 2 L19 11 L19 24 L2 24 Z" fill="#ffffff" stroke="#d2d2d2" stroke-width="1.6"/><path d="M6 16 L15 16" stroke="#c8c8c8" stroke-width="1.6"/></svg>
<svg class="r" style="left:1536.00px;top:1137.90px;" width="21" height="26" viewBox="0 0 21 26"><path d="M2 11 L10.5 2 L19 11 L19 24 L2 24 Z" fill="#ffffff" stroke="#d2d2d2" stroke-width="1.6"/><path d="M6 16 L15 16" stroke="#c8c8c8" stroke-width="1.6"/></svg>
<svg class="r" style="left:1536.00px;top:1313.90px;" width="21" height="26" viewBox="0 0 21 26"><path d="M2 11 L10.5 2 L19 11 L19 24 L2 24 Z" fill="#ffffff" stroke="#d2d2d2" stroke-width="1.6"/><path d="M6 16 L15 16" stroke="#c8c8c8" stroke-width="1.6"/></svg>
<svg class="r" style="left:1536.00px;top:1445.90px;" width="21" height="26" viewBox="0 0 21 26"><path d="M2 11 L10.5 2 L19 11 L19 24 L2 24 Z" fill="#ffffff" stroke="#d2d2d2" stroke-width="1.6"/><path d="M6 16 L15 16" stroke="#c8c8c8" stroke-width="1.6"/></svg>
<svg class="r" style="left:1536.00px;top:483.40px;" width="21" height="26" viewBox="0 0 21 26"><path d="M2 2 L19 2 L19 15 L10.5 24 L2 15 Z" fill="#ffffff" stroke="#d2d2d2" stroke-width="1.6"/><path d="M6 9 L15 9" stroke="#c8c8c8" stroke-width="1.6"/></svg>
<svg class="r" style="left:1536.00px;top:1011.40px;" width="21" height="26" viewBox="0 0 21 26"><path d="M2 2 L19 2 L19 15 L10.5 24 L2 15 Z" fill="#ffffff" stroke="#d2d2d2" stroke-width="1.6"/><path d="M6 9 L15 9" stroke="#c8c8c8" stroke-width="1.6"/></svg>
<svg class="r" style="left:1536.00px;top:1231.40px;" width="21" height="26" viewBox="0 0 21 26"><path d="M2 2 L19 2 L19 15 L10.5 24 L2 15 Z" fill="#ffffff" stroke="#d2d2d2" stroke-width="1.6"/><path d="M6 9 L15 9" stroke="#c8c8c8" stroke-width="1.6"/></svg>
<svg class="r" style="left:1536.00px;top:1363.40px;" width="21" height="26" viewBox="0 0 21 26"><path d="M2 2 L19 2 L19 15 L10.5 24 L2 15 Z" fill="#ffffff" stroke="#d2d2d2" stroke-width="1.6"/><path d="M6 9 L15 9" stroke="#c8c8c8" stroke-width="1.6"/></svg>
<div class="r" style="left:1414.00px;top:185.50px;width:1790.00px;height:89.50px;background:#ffffff;"></div>
<div class="r" style="left:1414.00px;top:185.50px;width:132.00px;height:89.50px;background:#f3f3f3;"></div>
<div class="r" style="left:1545.50px;top:185.50px;width:1.60px;height:89.50px;background:#dcdcdc;"></div>
<div class="r" style="left:1414.00px;top:274.00px;width:1790.00px;height:1.60px;background:#dcdcdc;"></div>
<div class="t" style="left:1437.94px;top:211.18px;font-family:'Liberation Mono', monospace;font-size:26.0px;letter-spacing:-1.453px;color:#a4a4a4;">56</div>
<div class="t" style="left:1437.51px;top:254.88px;font-family:'Liberation Mono', monospace;font-size:26.0px;letter-spacing:-1.453px;color:#a4a4a4;">81</div>
<div class="t" style="left:1557.24px;top:210.92px;font-family:'Liberation Mono', monospace;font-size:27.0px;letter-spacing:-0.603px;"><span style="color:#0033b3;">public</span><span style="color:#080808;"> </span><span style="color:#0033b3;">class</span><span style="color:#080808;"> </span><span style="color:#080808;">NodeUpdateHandler</span><span style="color:#080808;"> </span><span style="color:#0033b3;">implements</span><span style="color:#080808;"> </span><span style="color:#080808;">TransactionHandler</span><span style="color:#080808;"> </span><span style="color:#080808;">{</span></div>
<div class="t" style="left:1557.24px;top:254.62px;font-family:'Liberation Mono', monospace;font-size:27.0px;letter-spacing:-0.603px;"><span style="color:#080808;">    </span><span style="color:#0033b3;">public</span><span style="color:#080808;"> </span><span style="color:#0033b3;">void</span><span style="color:#080808;"> </span><span style="color:#00627a;">preHandle</span><span style="color:#080808;">(</span><span style="color:#9e880d;">@NonNull</span><span style="color:#080808;"> </span><span style="color:#0033b3;">final</span><span style="color:#080808;"> </span><span style="color:#080808;">PreHandleContext</span><span style="color:#080808;"> </span><span style="color:#080808;">context</span><span style="color:#080808;">)</span><span style="color:#080808;"> </span><span style="color:#0033b3;">throws</span><span style="color:#080808;"> </span><span style="color:#080808;">PreCheckException</span><span style="color:#080808;"> </span><span style="color:#080808;">{</span></div>
<svg class="r" style="left:2936.00px;top:196.00px;" width="32" height="32" viewBox="0 0 32 32"><circle cx="16" cy="16" r="12.5" fill="none" stroke="#4d9a4d" stroke-width="2.4"/><path d="M8.5 16.5 Q10 13 11.5 16.5 Q13 20 14.5 16.5 Q16 13 17.5 16.5 Q19 20 20.5 16.5 Q22 13 23.5 16.5" stroke="#4d9a4d" stroke-width="1.6" fill="none"/></svg>
<div class="r" style="left:2984.50px;top:194.00px;width:1.60px;height:36.00px;background:#d6d6d6;"></div>
<svg class="r" style="left:3007.00px;top:198.00px;" width="30" height="28" viewBox="0 0 30 28"><path d="M15 1 L29 27 L1 27 Z" fill="#f1c232"/><path d="M15 9 L15 19 M15 22 L15 25" stroke="#3c3c3c" stroke-width="3"/></svg>
<div class="t" style="left:3038.77px;top:214.68px;font-size:24px;color:#8a8a8a;">7</div>
<svg class="r" style="left:3064.00px;top:196.00px;" width="32" height="34" viewBox="0 0 32 34"><path d="M3 13 L11 21 L27 3" stroke="#5aa05a" stroke-width="3.6" fill="none"/><path d="M3 25 L7 30 L11 26 L15 31 L19 26 L23 30" stroke="#5aa05a" stroke-width="2" fill="none"/></svg>
<div class="t" style="left:3096.17px;top:214.68px;font-size:24px;color:#8a8a8a;">1</div>
<svg class="r" style="left:3128.00px;top:203.00px;" width="22" height="14" viewBox="0 0 22 14"><path d="M2 12 L11 3 L20 12" stroke="#6e6e6e" stroke-width="2.4" fill="none"/></svg>
<svg class="r" style="left:3170.00px;top:206.00px;" width="22" height="14" viewBox="0 0 22 14"><path d="M2 2 L11 11 L20 2" stroke="#6e6e6e" stroke-width="2.4" fill="none"/></svg>
<div class="r" style="left:3176.00px;top:625.50px;width:28.00px;height:4.00px;background:#e5c33f;"></div>
<div class="r" style="left:3176.00px;top:639.00px;width:28.00px;height:4.00px;background:#e5c33f;"></div>
<div class="r" style="left:3176.00px;top:770.00px;width:28.00px;height:4.00px;background:#e5c33f;"></div>
<div class="r" style="left:3176.00px;top:1056.00px;width:28.00px;height:4.00px;background:#e5c33f;"></div>
<div class="r" style="left:3176.00px;top:1244.00px;width:28.00px;height:4.00px;background:#e5c33f;"></div>
<div class="r" style="left:3176.00px;top:1308.00px;width:28.00px;height:4.00px;background:#e5c33f;"></div>
<div class="r" style="left:3176.00px;top:1330.00px;width:28.00px;height:4.00px;background:#e5c33f;"></div>
<div class="r" style="left:3182px;top:844px;width:16px;height:193px;background:#c8c8c8;border-radius:8px;"></div>
<div class="r" style="left:3176.00px;top:892.00px;width:28.00px;height:3.50px;background:#2d54a3;"></div>
<div class="r" style="left:648.00px;top:1460.00px;width:2556.00px;height:450.00px;background:#f2f2f2;"></div>
<div class="r" style="left:648.00px;top:1460.00px;width:2556.00px;height:55.00px;background:#e4e6eb;"></div>
<div class="r" style="left:648.00px;top:1459.50px;width:2556.00px;height:1.60px;background:#cfd1d5;"></div>
<div class="r" style="left:648.00px;top:1514.00px;width:2556.00px;height:1.60px;background:#cfd1d5;"></div>
<div class="t" style="left:658.47px;top:1489.44px;font-size:24.7px;color:#1a1a1a;letter-spacing:1.226px;">Debug:</div>
<svg class="r" style="left:780.00px;top:1472.00px;" width="34" height="34" viewBox="0 0 34 34"><rect x="9" y="2" width="22" height="17" fill="none" stroke="#a8b2bd" stroke-width="2"/><rect x="2" y="9" width="22" height="17" fill="#e4e6eb" stroke="#a8b2bd" stroke-width="2"/><rect x="4" y="18" width="18" height="6" fill="#8fc7e6"/><path d="M6 13 L18 13 M15 10 L19 13 L15 16" stroke="#555" stroke-width="2" fill="none"/><circle cx="28.5" cy="28" r="4.2" fill="#5fbf49" stroke="#e4e6eb" stroke-width="1"/></svg>
<div class="t" style="left:821.10px;top:1489.44px;font-size:24.7px;color:#1a1a1a;letter-spacing:0.130px;">jvmSolo</div>
<svg class="r" style="left:924.50px;top:1480.50px;" width="15" height="15" viewBox="0 0 15 15"><path d="M1 1 L14 14 M14 1 L1 14" stroke="#9a9a9a" stroke-width="1.7"/></svg>
<div class="r" style="left:756px;top:1510px;width:205.5px;height:5px;background:#4d7fcf;border-radius:2.5px 2.5px 0 0;"></div>
<svg class="r" style="left:3112.00px;top:1474.00px;" width="27" height="27" viewBox="0 0 27 27"><circle cx="13.5" cy="13.5" r="9.97" fill="#6e6e6e"/><rect x="10.70" y="0.21" width="5.61" height="6.23" rx="0.8" fill="#6e6e6e" transform="rotate(0 13.5 13.5)"/><rect x="10.70" y="0.21" width="5.61" height="6.23" rx="0.8" fill="#6e6e6e" transform="rotate(60 13.5 13.5)"/><rect x="10.70" y="0.21" width="5.61" height="6.23" rx="0.8" fill="#6e6e6e" transform="rotate(120 13.5 13.5)"/><rect x="10.70" y="0.21" width="5.61" height="6.23" rx="0.8" fill="#6e6e6e" transform="rotate(180 13.5 13.5)"/><rect x="10.70" y="0.21" width="5.61" height="6.23" rx="0.8" fill="#6e6e6e" transform="rotate(240 13.5 13.5)"/><rect x="10.70" y="0.21" width="5.61" height="6.23" rx="0.8" fill="#6e6e6e" transform="rotate(300 13.5 13.5)"/><circle cx="13.5" cy="13.5" r="4.57" fill="#e4e6eb"/></svg>
<div class="r" style="left:3166.00px;top:1485.50px;width:25.00px;height:3.50px;background:#6e6e6e;"></div>
<div class="r" style="left:704.00px;top:1515.00px;width:1.60px;height:395.00px;background:#d1d1d1;"></div>
<svg class="r" style="left:662.00px;top:1528.00px;" width="32" height="32" viewBox="0 0 32 32"><path d="M20 4 A11 11 0 1 0 24 20" fill="none" stroke="#62a862" stroke-width="3.6"/><path d="M16 0 L28 8 L16 14 Z" fill="#62a862"/><rect x="14" y="18" width="12" height="12" fill="#6e6e6e"/></svg>
<svg class="r" style="left:662.00px;top:1581.00px;" width="30" height="30" viewBox="0 0 30 30"><path d="M3 26 L15 14" stroke="#6e6e6e" stroke-width="5.5" stroke-linecap="round"/><path d="M14 16 A8 8 0 1 1 26 6 L20 10 L22 13 L27 10 A8 8 0 0 1 14 16 Z" fill="#6e6e6e"/></svg>
<div class="r" style="left:656.00px;top:1627.00px;width:40.00px;height:1.60px;background:#cfcfcf;"></div>
<svg class="r" style="left:664.00px;top:1647.00px;" width="28" height="28" viewBox="0 0 28 28"><rect x="1" y="3" width="4.5" height="22" fill="#62a862"/><path d="M9 3 L27 14 L9 25 Z" fill="#62a862"/></svg>
<svg class="r" style="left:667.00px;top:1698.00px;" width="24" height="26" viewBox="0 0 24 26"><rect x="2" y="2" width="6" height="22" fill="#c2c2c2"/><rect x="14" y="2" width="6" height="22" fill="#c2c2c2"/></svg>
<div class="r" style="left:666.50px;top:1755.00px;width:21.00px;height:21.00px;background:#d35c5c;"></div>
<div class="r" style="left:656.00px;top:1797.00px;width:40.00px;height:1.60px;background:#cfcfcf;"></div>
<svg class="r" style="left:662.00px;top:1815.00px;" width="30" height="30" viewBox="0 0 30 30"><circle cx="11" cy="19" r="9.5" fill="#d35c5c"/><circle cx="19" cy="11" r="9.5" fill="#d35c5c" stroke="#f2f2f2" stroke-width="2"/></svg>
<svg class="r" style="left:662.00px;top:1868.00px;" width="30" height="30" viewBox="0 0 30 30"><circle cx="15" cy="15" r="11" fill="#d35c5c"/><path d="M3 28 L28 3" stroke="#f2f2f2" stroke-width="5"/><path d="M3 27 L27 3" stroke="#6e6e6e" stroke-width="2.4"/></svg>
<div class="t" style="left:730.67px;top:1544.04px;font-size:24.7px;color:#1a1a1a;letter-spacing:-0.579px;">Debugger</div>
<div class="t" style="left:885.45px;top:1544.04px;font-size:24.7px;color:#1a1a1a;letter-spacing:-0.746px;">Console</div>
<div class="r" style="left:706.00px;top:1570.00px;width:155.70px;height:3.80px;background:#4d7fcf;"></div>
<div class="r" style="left:706.00px;top:1572.50px;width:2498.00px;height:1.60px;background:#d1d1d1;"></div>
<svg class="r" style="left:1010.00px;top:1533.00px;" width="25" height="24" viewBox="0 0 25 24"><rect x="0" y="1" width="24" height="4" fill="#6e6e6e"/><rect x="0" y="9.5" width="24" height="5" fill="#4a9ad8"/><rect x="0" y="19" width="24" height="4" fill="#6e6e6e"/></svg>
<div class="r" style="left:1054.50px;top:1525.00px;width:1.60px;height:38.00px;background:#cfcfcf;"></div>
<svg class="r" style="left:1073.00px;top:1530.00px;" width="30" height="28" viewBox="0 0 30 28"><path d="M2 12 L10 4 L19 13" stroke="#4a9ad8" stroke-width="3.2" fill="none"/><path d="M14 16 L26 16 L26 4 Z" fill="#4a9ad8"/><rect x="2" y="22" width="25" height="4" fill="#6e6e6e"/></svg>
<svg class="r" style="left:1127.00px;top:1530.00px;" width="26" height="28" viewBox="0 0 26 28"><path d="M13 1 L13 14" stroke="#4a9ad8" stroke-width="3.4"/><path d="M5 11 L21 11 L13 19 Z" fill="#4a9ad8"/><rect x="1" y="22" width="24" height="4" fill="#6e6e6e"/></svg>
<svg class="r" style="left:1179.00px;top:1530.00px;" width="26" height="28" viewBox="0 0 26 28"><path d="M13 19 L13 7" stroke="#4a9ad8" stroke-width="3.4"/><path d="M5 10 L21 10 L13 1 Z" fill="#4a9ad8"/><rect x="1" y="22" width="24" height="4" fill="#6e6e6e"/></svg>
<svg class="r" style="left:1231.00px;top:1532.00px;" width="30" height="30" viewBox="0 0 30 30"><path d="M2 2 L12 12" stroke="#4a9ad8" stroke-width="3.4"/><path d="M6 15 L16 15 L16 5 Z" fill="#4a9ad8"/><path d="M17 11 L27 11 M22 11 L22 26 M17 26 L27 26" stroke="#555" stroke-width="1.8"/></svg>
<div class="r" style="left:1276.00px;top:1525.00px;width:1.60px;height:38.00px;background:#cfcfcf;"></div>
<svg class="r" style="left:1297.00px;top:1532.00px;" width="26" height="25" viewBox="0 0 26 25"><rect x="1" y="1" width="24" height="23" fill="#6e6e6e"/><rect x="4" y="4" width="18" height="4" fill="#f2f2f2"/><rect x="4" y="11" width="4.5" height="4" fill="#f2f2f2"/><rect x="10.8" y="11" width="4.5" height="4" fill="#f2f2f2"/><rect x="17.5" y="11" width="4.5" height="4" fill="#f2f2f2"/><rect x="4" y="17" width="4.5" height="4" fill="#f2f2f2"/><rect x="10.8" y="17" width="4.5" height="4" fill="#f2f2f2"/><rect x="17.5" y="17" width="4.5" height="4" fill="#f2f2f2"/></svg>
<svg class="r" style="left:1349.00px;top:1533.00px;" width="26" height="24" viewBox="0 0 26 24"><path d="M0 3 L9 3 M14 3 L25 3 M0 12 L12 12 M17 12 L25 12 M0 21 L9 21 M14 21 L25 21" stroke="#c4c4c4" stroke-width="3.4"/><path d="M8 23 L18 1" stroke="#c4c4c4" stroke-width="2"/></svg>
<svg class="r" style="left:3168.00px;top:1532.00px;" width="30" height="30" viewBox="0 0 30 30"><rect x="1" y="1" width="11" height="10" fill="#6e6e6e"/><rect x="14" y="1" width="11" height="10" fill="#6e6e6e"/><rect x="1" y="13" width="24" height="10" fill="#6e6e6e"/><path d="M17 24 L29 24 L23 30 Z" fill="#222"/></svg>
<div class="r" style="left:706.00px;top:1574.00px;width:595.00px;height:54.00px;background:#f2f2f2;"></div>
<div class="t" style="left:731.27px;top:1601.14px;font-size:24.7px;color:#1a1a1a;letter-spacing:-1.299px;">Frames</div>
<div class="t" style="left:861.15px;top:1601.14px;font-size:24.7px;color:#1a1a1a;letter-spacing:-1.095px;">Threads</div>
<div class="r" style="left:706.00px;top:1626.00px;width:130.00px;height:4.00px;background:#4d7fcf;"></div>
<div class="r" style="left:706.00px;top:1628.50px;width:595.00px;height:1.60px;background:#d1d1d1;"></div>
<div class="r" style="left:706.00px;top:1630.00px;width:595.00px;height:56.00px;background:#ffffff;"></div>
<svg class="r" style="left:724.00px;top:1644.00px;" width="32" height="26" viewBox="0 0 32 26"><path d="M3 13 L11 21 L29 3" stroke="#e8956a" stroke-width="4.2" fill="none"/></svg>
<div class="t" style="left:762.15px;top:1658.44px;font-size:24.7px;color:#1a1a1a;letter-spacing:1.100px;">"&lt;scheduler Tr..."main": RUNNING</div>
<div class="r" style="left:1198.5px;top:1636px;width:43px;height:44px;background:#cfcfcf;border-radius:6px;"></div>
<svg class="r" style="left:1206.00px;top:1644.00px;" width="28" height="28" viewBox="0 0 28 28"><path d="M2 3 L26 3 L17 14 L17 25 L11 25 L11 14 Z" fill="#6e6e6e"/></svg>
<svg class="r" style="left:1261.00px;top:1654.00px;" width="19" height="11" viewBox="0 0 19 11"><path d="M1 1 L18 1 L9.5 10 Z" fill="#6e6e6e"/></svg>
<div class="r" style="left:706.00px;top:1686.00px;width:595.00px;height:1.60px;background:#dcdcdc;"></div>
<div class="r" style="left:706.00px;top:1687.50px;width:566.00px;height:222.50px;background:#ffffff;"></div>
<div class="r" style="left:1272.00px;top:1687.50px;width:29.00px;height:222.50px;background:#f4f4f4;"></div>
<div class="r" style="left:706.00px;top:1688.60px;width:566.00px;height:39.20px;background:#3a72c2;"></div>
<div class="r" style="left:1300.50px;top:1574.00px;width:1.60px;height:336.00px;background:#d1d1d1;"></div>
<div class="r" style="left:1278.5px;top:1694.7px;width:15.5px;height:43px;background:#c9c9c9;border-radius:8px;"></div>
<div class="clip" style="left:706px;top:1687.5px;width:566px;height:213px;"><div style="position:absolute;left:-706px;top:-1687.5px;width:3204px;height:1910px">
<svg class="r" style="left:722.00px;top:1696.00px;" width="28" height="24" viewBox="0 0 28 24"><path d="M3 9 L10 2 M3 9 L10 16" stroke="#fff" stroke-width="2.2" fill="none"/><path d="M3 9 L17 9 Q25 9 25 15 Q25 22 17 22 L12 22" stroke="#fff" stroke-width="2.2" fill="none"/></svg>
<div class="t" style="left:756.98px;top:1708.92px;font-size:26.2px;color:#ffffff;letter-spacing:0.527px;">handle:106, NodeUpdateHandler</div>
<div class="t" style="left:1164.27px;top:1708.92px;font-size:26.2px;color:#ffffff;font-style:italic;">(com.hedera.node.app</div>
<div class="t" style="left:757.70px;top:1749.12px;font-size:26.2px;color:#000000;letter-spacing:0.518px;">dispatchHandle:145, TransactionDispatcher</div>
<div class="t" style="left:758.40px;top:1788.92px;font-size:26.2px;color:#000000;letter-spacing:0.518px;">tryHandle:143, DispatchProcessor</div>
<div class="t" style="left:1182.57px;top:1788.92px;font-size:26.2px;color:#8c8c8c;font-style:italic;">(com.hedera.node</div>
<div class="t" style="left:757.11px;top:1828.52px;font-size:26.2px;color:#000000;letter-spacing:0.546px;">processDispatch:120, DispatchProcessor</div>
<div class="t" style="left:1266.77px;top:1828.52px;font-size:26.2px;color:#8c8c8c;font-style:italic;">(com.hedera</div>
<div class="t" style="left:757.69px;top:1868.32px;font-size:26.2px;color:#000000;letter-spacing:0.710px;">execute:336, HandleWorkflow</div>
<div class="t" style="left:1134.77px;top:1868.32px;font-size:26.2px;color:#8c8c8c;font-style:italic;">(com.hedera.node</div>
<div class="t" style="left:756.98px;top:1907.92px;font-size:26.2px;color:#000000;letter-spacing:0.518px;">handlePlatformTransaction:358, HandleWorkflow</div>
</div></div>
<div class="r" style="left:706.00px;top:1900.00px;width:566.00px;height:10.00px;background:#f2f2f2;"></div>
<div class="r" style="left:714.7px;top:1903px;width:246px;height:10px;background:#c9c9c9;border-radius:5px;"></div>
<div class="r" style="left:1302.00px;top:1574.00px;width:1805.00px;height:336.00px;background:#f2f2f2;"></div>
<svg class="r" style="left:1319.00px;top:1585.00px;" width="11" height="18" viewBox="0 0 11 18"><path d="M1.5 1.5 L9 9 L1.5 16.5" stroke="#6e6e6e" stroke-width="2.2" fill="none"/></svg>
<svg class="r" style="left:1319.00px;top:1625.00px;" width="11" height="18" viewBox="0 0 11 18"><path d="M1.5 1.5 L9 9 L1.5 16.5" stroke="#6e6e6e" stroke-width="2.2" fill="none"/></svg>
<svg class="r" style="left:1355.00px;top:1582.00px;" width="22" height="22" viewBox="0 0 22 22"><rect x="0" y="0" width="21" height="5" fill="#f0cf8f"/><rect x="0" y="8" width="21" height="5" fill="#f0cf8f"/><rect x="0" y="16" width="21" height="5" fill="#f0cf8f"/></svg>
<svg class="r" style="left:1351.50px;top:1619.50px;" width="29" height="29" viewBox="0 0 29 29"><circle cx="14" cy="14" r="13.8" fill="#f0cf8f"/><text x="8.5" y="20" font-size="20" font-family="Liberation Sans" fill="#4d4d4d">p</text></svg>
<div class="t" style="left:1388.21px;top:1593.69px;font-size:26.0px;color:#7a0a0a;letter-spacing:1.291px;">this</div>
<div class="t" style="left:1439.23px;top:1593.69px;font-size:26.0px;color:#000;">=</div>
<div class="t" style="left:1462.77px;top:1593.69px;font-size:26.0px;color:#808080;letter-spacing:0.545px;">{NodeUpdateHandler@13679}</div>
<div class="t" style="left:1386.80px;top:1634.29px;font-size:26.0px;color:#7a0a0a;letter-spacing:0.767px;">handleContext</div>
<div class="t" style="left:1570.73px;top:1634.29px;font-size:26.0px;color:#000;">=</div>
<div class="t" style="left:1594.77px;top:1634.29px;font-size:26.0px;color:#808080;letter-spacing:0.624px;">{DispatchHandleContext@13680}</div>
<div class="r" style="left:3107.00px;top:1574.00px;width:1.60px;height:336.00px;background:#d1d1d1;"></div>
<div class="t" style="left:3133.00px;top:1601.92px;font-size:26.2px;color:#8c8c8c;">W</div>
<div class="r" style="left:3145.00px;top:1580.00px;width:62.00px;height:40.00px;background:#f2f2f2;background:linear-gradient(90deg,rgba(242,242,242,0) 0%,#f2f2f2 30%);"></div>
<svg class="r" style="left:3170.00px;top:1597.00px;" width="22" height="14" viewBox="0 0 22 14"><path d="M2 2 L11 11 L20 2" stroke="#6e6e6e" stroke-width="2.6" fill="none"/></svg>
<div class="r" style="left:3108.00px;top:1626.00px;width:40.00px;height:4.00px;background:#9aa6bb;"></div>
<div class="r" style="left:3108.00px;top:1628.50px;width:96.00px;height:1.60px;background:#d1d1d1;"></div>
<svg class="r" style="left:3122.00px;top:1643.00px;" width="24" height="24" viewBox="0 0 24 24"><path d="M12 2 L12 22 M2 12 L22 12" stroke="#6e6e6e" stroke-width="3.2"/></svg>
<div class="t" style="left:3183.00px;top:1654.38px;font-size:22px;color:#6e6e6e;">››</div>
<div class="r" style="left:3108.00px;top:1677.50px;width:96.00px;height:1.60px;background:#d1d1d1;"></div>
<div class="r" style="left:3108.00px;top:1679.00px;width:96.00px;height:57.00px;background:#ffffff;"></div>
<div class="t" style="left:3130.00px;top:1708.38px;font-size:22px;color:#6e6e6e;">››</div>
<svg class="r" style="left:3165.00px;top:1700.00px;" width="20" height="12" viewBox="0 0 20 12"><path d="M1 1 L19 1 L10 11 Z" fill="#6e6e6e"/></svg>
<div class="r" style="left:3108.00px;top:1735.50px;width:96.00px;height:1.60px;background:#d1d1d1;"></div>
<div class="clip" style="left:3108px;top:1740px;width:96px;height:170px;"><div style="position:absolute;left:-3108px;top:-1740px;width:3204px;height:1910px">
<div class="t" style="left:3098.00px;top:1825.99px;font-size:26px;color:#9a9a9a;">o watches</div>
</div></div>
</body></html>
